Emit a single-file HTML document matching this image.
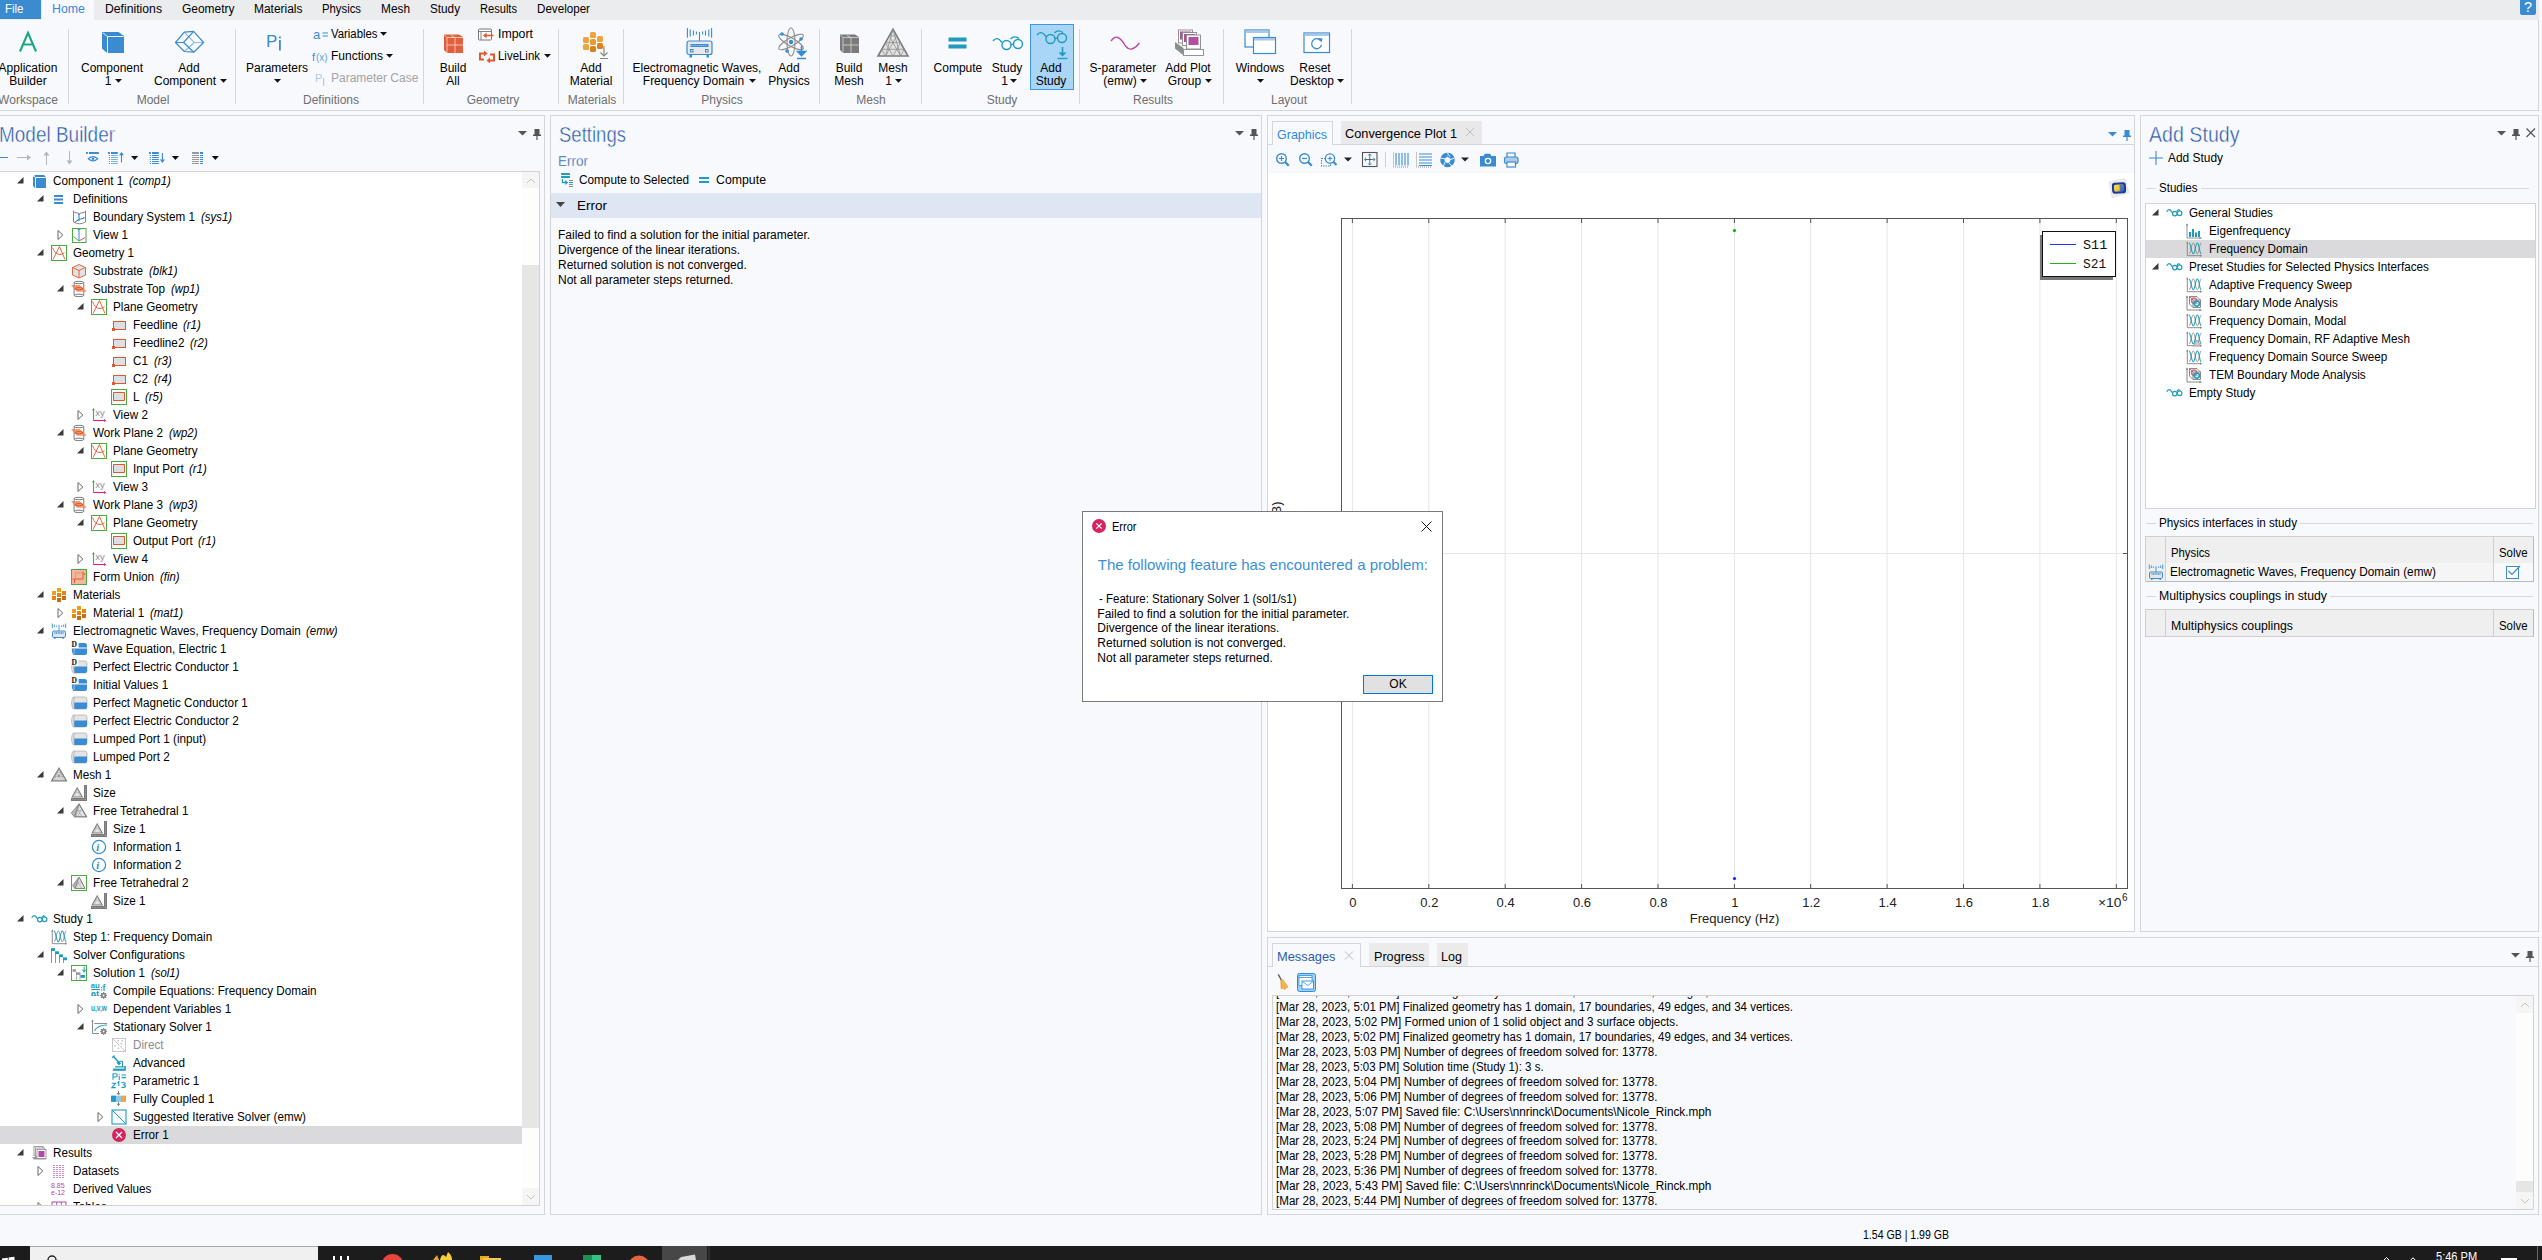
<!DOCTYPE html>
<html><head><meta charset="utf-8"><style>
html,body{margin:0;padding:0;}
body{width:2542px;height:1260px;position:relative;overflow:hidden;background:#f8f9fd;font-family:"Liberation Sans",sans-serif;font-size:12px;color:#000;}
.a{position:absolute;}
.t{white-space:pre;}
svg{overflow:visible;}
</style></head><body>
<div class="a" style="left:0px;top:0px;width:2539px;height:20px;background:#ebecee;"></div>
<div class="a" style="left:-5px;top:115px;width:550px;height:1100px;background:#f8f9fd;border:1px solid #d4d5d8;box-sizing:border-box;"></div>
<div class="a" style="left:550px;top:115px;width:712px;height:1100px;background:#f8f9fd;border:1px solid #d4d5d8;box-sizing:border-box;"></div>
<div class="a" style="left:1267px;top:115px;width:868px;height:817px;background:#f8f9fd;border:1px solid #d4d5d8;box-sizing:border-box;"></div>
<div class="a" style="left:2140px;top:115px;width:399px;height:817px;background:#f8f9fd;border:1px solid #d4d5d8;box-sizing:border-box;"></div>
<div class="a" style="left:1267px;top:937px;width:1272px;height:278px;background:#f8f9fd;border:1px solid #d4d5d8;box-sizing:border-box;"></div>
<div class="a" style="left:0px;top:0px;width:41px;height:19px;background:#3b8bd1;"></div>
<div class="a" style="left:42px;top:0px;width:52px;height:20px;background:#f8f9fd;"></div>
<div class="a" style="left:2520px;top:0px;width:16px;height:15px;background:#3b8bd1;border-radius:0 0 2px 2px;"></div>
<div class="a" style="left:0px;top:110px;width:2539px;height:1px;background:#d4d5d8;"></div>
<div class="a" style="left:2538px;top:20px;width:1px;height:91px;background:#d4d5d8;"></div>
<div class="a" style="left:68px;top:29px;width:1px;height:75px;background:#d6d6d6;"></div>
<div class="a" style="left:235px;top:29px;width:1px;height:75px;background:#d6d6d6;"></div>
<div class="a" style="left:423px;top:29px;width:1px;height:75px;background:#d6d6d6;"></div>
<div class="a" style="left:558px;top:29px;width:1px;height:75px;background:#d6d6d6;"></div>
<div class="a" style="left:623px;top:29px;width:1px;height:75px;background:#d6d6d6;"></div>
<div class="a" style="left:819px;top:29px;width:1px;height:75px;background:#d6d6d6;"></div>
<div class="a" style="left:921px;top:29px;width:1px;height:75px;background:#d6d6d6;"></div>
<div class="a" style="left:1079px;top:29px;width:1px;height:75px;background:#d6d6d6;"></div>
<div class="a" style="left:1223px;top:29px;width:1px;height:75px;background:#d6d6d6;"></div>
<div class="a" style="left:1351px;top:29px;width:1px;height:75px;background:#d6d6d6;"></div>
<div class="a" style="left:1030px;top:24px;width:44px;height:66px;background:#a9d5f7;border:1px solid #3d97e6;box-sizing:border-box;"></div>
<div class="a" style="left:0px;top:1246px;width:2542px;height:14px;background:#1c1c1c;"></div>
<div class="a" style="left:-5px;top:171px;width:545px;height:1035px;background:#ffffff;border:1px solid #d2d2d2;box-sizing:border-box;"></div>
<div class="a" style="left:551px;top:193px;width:710px;height:25px;background:#dde6f2;"></div>
<div class="a" style="left:1268px;top:144px;width:866px;height:1px;background:#d4d5d8;"></div>
<div class="a" style="left:1268px;top:173px;width:866px;height:758px;background:#ffffff;"></div>
<div class="a" style="left:2146px;top:188px;width:10px;height:1px;background:#d8d8d8;"></div>
<div class="a" style="left:2201px;top:188px;width:328px;height:1px;background:#d8d8d8;"></div>
<div class="a" style="left:2145px;top:203px;width:391px;height:306px;background:#ffffff;border:1px solid #d2d2d2;box-sizing:border-box;"></div>
<div class="a" style="left:2146px;top:523px;width:10px;height:1px;background:#d8d8d8;"></div>
<div class="a" style="left:2300px;top:523px;width:233px;height:1px;background:#d8d8d8;"></div>
<div class="a" style="left:2145px;top:536px;width:389px;height:46px;background:#efefef;border:1px solid #cfcfcf;box-sizing:border-box;"></div>
<div class="a" style="left:2146px;top:596px;width:10px;height:1px;background:#d8d8d8;"></div>
<div class="a" style="left:2330px;top:596px;width:203px;height:1px;background:#d8d8d8;"></div>
<div class="a" style="left:2145px;top:609px;width:389px;height:28px;background:#efefef;border:1px solid #cfcfcf;box-sizing:border-box;"></div>
<div class="a" style="left:1268px;top:966px;width:1270px;height:1px;background:#d4d5d8;"></div>
<div class="a" style="left:1272px;top:995px;width:1262px;height:215px;border:1px solid #d2d2d2;box-sizing:border-box;"></div>
<div class="a" style="left:30px;top:1246px;width:288px;height:14px;background:#f0f0f0;border-top:1px solid #aaa;box-sizing:border-box;"></div>
<div class="a" style="left:522px;top:172px;width:17px;height:1033px;background:#fdfdfd;"></div>
<div class="a" style="left:522px;top:172px;width:17px;height:16px;background:#f5f5f5;"></div>
<div class="a" style="left:522px;top:1188px;width:17px;height:17px;background:#f5f5f5;"></div>
<div class="a" style="left:522px;top:265px;width:17px;height:863px;background:#e6e6e6;"></div>
<div class="a" style="left:0px;top:1126px;width:522px;height:18px;background:#dadadd;"></div>
<div class="a" style="left:1272px;top:121px;width:61px;height:24px;background:#f8f9fd;border:1px solid #d4d5d8;border-bottom:none;box-sizing:border-box;"></div>
<div class="a" style="left:1341px;top:121px;width:141px;height:23px;background:#e9e9ea;"></div>
<svg class="a" style="left:1341px;top:218px;" width="787" height="671" viewBox="0 0 787 671"><path d="M11.4 1 V670" stroke="#e6e6e6" stroke-width="1"/><path d="M11.4 1 V5 M11.4 666 V670" stroke="#555" stroke-width="1"/><path d="M87.8 1 V670" stroke="#e6e6e6" stroke-width="1"/><path d="M87.8 1 V5 M87.8 666 V670" stroke="#555" stroke-width="1"/><path d="M164.2 1 V670" stroke="#e6e6e6" stroke-width="1"/><path d="M164.2 1 V5 M164.2 666 V670" stroke="#555" stroke-width="1"/><path d="M240.6 1 V670" stroke="#e6e6e6" stroke-width="1"/><path d="M240.6 1 V5 M240.6 666 V670" stroke="#555" stroke-width="1"/><path d="M317.0 1 V670" stroke="#e6e6e6" stroke-width="1"/><path d="M317.0 1 V5 M317.0 666 V670" stroke="#555" stroke-width="1"/><path d="M393.4 1 V670" stroke="#e6e6e6" stroke-width="1"/><path d="M393.4 1 V5 M393.4 666 V670" stroke="#555" stroke-width="1"/><path d="M469.7 1 V670" stroke="#e6e6e6" stroke-width="1"/><path d="M469.7 1 V5 M469.7 666 V670" stroke="#555" stroke-width="1"/><path d="M546.1 1 V670" stroke="#e6e6e6" stroke-width="1"/><path d="M546.1 1 V5 M546.1 666 V670" stroke="#555" stroke-width="1"/><path d="M622.5 1 V670" stroke="#e6e6e6" stroke-width="1"/><path d="M622.5 1 V5 M622.5 666 V670" stroke="#555" stroke-width="1"/><path d="M698.9 1 V670" stroke="#e6e6e6" stroke-width="1"/><path d="M698.9 1 V5 M698.9 666 V670" stroke="#555" stroke-width="1"/><path d="M775.3 1 V670" stroke="#e6e6e6" stroke-width="1"/><path d="M775.3 1 V5 M775.3 666 V670" stroke="#555" stroke-width="1"/><path d="M1 335.5 H786" stroke="#e6e6e6" stroke-width="1"/><path d="M1 335.5 H5 M782 335.5 H786" stroke="#555" stroke-width="1"/></svg>
<div class="a" style="left:2146px;top:240px;width:389px;height:18px;background:#dadadd;"></div>
<div class="a" style="left:2166px;top:563px;width:327px;height:18px;background:#f5f5f5;"></div>
<div class="a" style="left:2494px;top:563px;width:39px;height:18px;background:#f9f9fb;"></div>
<div class="a" style="left:1272px;top:943px;width:89px;height:24px;background:#f8f9fd;border:1px solid #d4d5d8;border-bottom:none;box-sizing:border-box;"></div>
<div class="a" style="left:1369px;top:943px;width:60px;height:23px;background:#ebebeb;"></div>
<div class="a" style="left:1437px;top:943px;width:31px;height:23px;background:#ebebeb;"></div>
<div class="a" style="left:2516px;top:996px;width:17px;height:213px;background:#fdfdfd;"></div>
<div class="a" style="left:2516px;top:996px;width:17px;height:17px;background:#f5f5f5;"></div>
<div class="a" style="left:2516px;top:1192px;width:17px;height:17px;background:#f5f5f5;"></div>
<div class="a" style="left:2516px;top:1181px;width:17px;height:11px;background:#e6e6e6;"></div>
<svg class="a" style="left:526px;top:178px;" width="10" height="6" viewBox="0 0 10 6"><path d="M1 5 L5 1 L9 5" stroke="#c4c4c4" stroke-width="1" fill="none"/></svg>
<svg class="a" style="left:526px;top:1194px;" width="10" height="6" viewBox="0 0 10 6"><path d="M1 1 L5 5 L9 1" stroke="#c4c4c4" stroke-width="1" fill="none"/></svg>
<svg class="a" style="left:31px;top:173px;" width="16" height="16" viewBox="0 0 16 16"><path d="M2 4 L4 2 H13 L15 4 V15 H4 L2 13 Z" fill="#3a8bd1"/><path d="M4.5 15 V4.5 H15 M4.5 4.5 L2.3 2.3" stroke="#fff" stroke-width="0.9" fill="none"/></svg>
<svg class="a" style="left:17px;top:176.5px;" width="7" height="7" viewBox="0 0 7 7"><path d="M6.5 0 V6.5 H0 Z" fill="#3a3a3a"/></svg>
<svg class="a" style="left:51px;top:191px;" width="16" height="16" viewBox="0 0 16 16"><rect x="3" y="4" width="9" height="2" fill="#3a8bd1"/><rect x="3" y="7.5" width="9" height="2" fill="#3a8bd1"/><rect x="3" y="11" width="9" height="2" fill="#3a8bd1"/></svg>
<svg class="a" style="left:37px;top:194.5px;" width="7" height="7" viewBox="0 0 7 7"><path d="M6.5 0 V6.5 H0 Z" fill="#3a3a3a"/></svg>
<svg class="a" style="left:71px;top:209px;" width="16" height="16" viewBox="0 0 16 16"><path d="M2.5 1.5 V13 Q8.5 16.5 14.5 13 V1.5 M2.5 3 Q8.5 6 14.5 3" stroke="#7a7a7a" stroke-width="0.9" fill="none"/><path d="M8 12 V5.5 M8 10.5 L13 9 M8 10.5 L4 13" stroke="#3a8bd1" stroke-width="1.1" fill="none"/><path d="M6.8 6 L8 4.2 L9.2 6 Z M12 8 L14 8.6 L12.6 10 Z" fill="#3a8bd1"/></svg>
<svg class="a" style="left:71px;top:227px;" width="16" height="16" viewBox="0 0 16 16"><rect x="1.5" y="1.5" width="13.5" height="14" fill="none" stroke="#4aab3f" stroke-width="1"/><path d="M8 14 V2.5 M6.5 2.6 H9.5" stroke="#3a8bd1" stroke-width="1" fill="none"/><path d="M8 14 L2.5 9.5" stroke="#4aab3f" stroke-width="0.9"/><path d="M8 14 L14 10.5" stroke="#e03a6a" stroke-width="0.9"/></svg>
<svg class="a" style="left:57px;top:230px;" width="7" height="10" viewBox="0 0 7 10"><path d="M1 0.5 L5.8 5 L1 9.5 Z" fill="none" stroke="#666" stroke-width="1"/></svg>
<svg class="a" style="left:51px;top:245px;" width="16" height="16" viewBox="0 0 16 16"><rect x="0.5" y="0.5" width="15" height="15" fill="none" stroke="#4aab3f" stroke-width="1"/><path d="M2 14.5 L8.5 1.5 L14 14.5 M1.5 2.5 Q4 9.5 9 9.5 Q12 9.5 13.5 7.5" stroke="#e4572e" stroke-width="0.9" fill="none"/></svg>
<svg class="a" style="left:37px;top:248.5px;" width="7" height="7" viewBox="0 0 7 7"><path d="M6.5 0 V6.5 H0 Z" fill="#3a3a3a"/></svg>
<svg class="a" style="left:71px;top:263px;" width="16" height="16" viewBox="0 0 16 16"><path d="M8 1.5 L14.5 4.5 V12 L8 15 L1.5 12 V4.5 Z" fill="#dfe3e6" stroke="#e4572e" stroke-width="0.9"/><path d="M1.5 4.5 L8 7.5 L14.5 4.5 M8 7.5 V15" stroke="#e4572e" stroke-width="0.9" fill="none"/></svg>
<svg class="a" style="left:71px;top:281px;" width="16" height="16" viewBox="0 0 16 16"><path d="M3.1 1.4 V14.5 M12.8 1.4 V14.5" stroke="#6e6e6e" stroke-width="0.9"/><ellipse cx="7.95" cy="1.5" rx="4.85" ry="1.2" fill="none" stroke="#6e6e6e" stroke-width="0.9"/><ellipse cx="7.95" cy="14.4" rx="4.85" ry="1.2" fill="#fff" stroke="#6e6e6e" stroke-width="0.9"/><path d="M0 4.1 H8.7 L16 10.7 H5.8 Z" fill="#ef8a5e" opacity="0.85"/><ellipse cx="8" cy="7.6" rx="3.8" ry="1.1" fill="none" stroke="#e25a28" stroke-width="1.1"/></svg>
<svg class="a" style="left:57px;top:284.5px;" width="7" height="7" viewBox="0 0 7 7"><path d="M6.5 0 V6.5 H0 Z" fill="#3a3a3a"/></svg>
<svg class="a" style="left:91px;top:299px;" width="16" height="16" viewBox="0 0 16 16"><rect x="0.5" y="0.5" width="15" height="15" fill="none" stroke="#4aab3f" stroke-width="1"/><path d="M2 14.5 L8.5 1.5 L14 14.5 M1.5 2.5 Q4 9.5 9 9.5 Q12 9.5 13.5 7.5" stroke="#e4572e" stroke-width="0.9" fill="none"/></svg>
<svg class="a" style="left:77px;top:302.5px;" width="7" height="7" viewBox="0 0 7 7"><path d="M6.5 0 V6.5 H0 Z" fill="#3a3a3a"/></svg>
<svg class="a" style="left:111px;top:317px;" width="16" height="16" viewBox="0 0 16 16"><rect x="2.5" y="4.5" width="12" height="8" fill="#dde0e3" stroke="#e4572e" stroke-width="1"/><rect x="1" y="11" width="3" height="3" fill="#e4572e"/></svg>
<svg class="a" style="left:111px;top:335px;" width="16" height="16" viewBox="0 0 16 16"><rect x="2.5" y="4.5" width="12" height="8" fill="#dde0e3" stroke="#e4572e" stroke-width="1"/><rect x="1" y="11" width="3" height="3" fill="#e4572e"/></svg>
<svg class="a" style="left:111px;top:353px;" width="16" height="16" viewBox="0 0 16 16"><rect x="2.5" y="4.5" width="12" height="8" fill="#dde0e3" stroke="#e4572e" stroke-width="1"/><rect x="1" y="11" width="3" height="3" fill="#e4572e"/></svg>
<svg class="a" style="left:111px;top:371px;" width="16" height="16" viewBox="0 0 16 16"><rect x="2.5" y="4.5" width="12" height="8" fill="#dde0e3" stroke="#e4572e" stroke-width="1"/><rect x="1" y="11" width="3" height="3" fill="#e4572e"/></svg>
<svg class="a" style="left:111px;top:389px;" width="16" height="16" viewBox="0 0 16 16"><rect x="0.5" y="0.5" width="15" height="15" fill="none" stroke="#4aab3f" stroke-width="1"/><rect x="2" y="3.5" width="12" height="8" fill="#dde0e3"/><path d="M2.5 12 V3.5 H13.5 V11.5 H2.5" stroke="#e4572e" stroke-width="1" fill="none"/></svg>
<svg class="a" style="left:91px;top:407px;" width="16" height="16" viewBox="0 0 16 16"><path d="M2.5 13.8 V2" stroke="#4aab3f" stroke-width="1.1"/><path d="M1 3.3 L2.5 1 L4 3.3Z" fill="#4aab3f"/><path d="M2.5 13.5 H13.5" stroke="#e0206a" stroke-width="1.1"/><path d="M13 12 L15.3 13.5 L13 15Z" fill="#e0206a"/><text x="4.3" y="9.3" font-size="9.5" fill="#8c8c96" font-family="Liberation Sans">xy</text></svg>
<svg class="a" style="left:77px;top:410px;" width="7" height="10" viewBox="0 0 7 10"><path d="M1 0.5 L5.8 5 L1 9.5 Z" fill="none" stroke="#666" stroke-width="1"/></svg>
<svg class="a" style="left:71px;top:425px;" width="16" height="16" viewBox="0 0 16 16"><path d="M3.1 1.4 V14.5 M12.8 1.4 V14.5" stroke="#6e6e6e" stroke-width="0.9"/><ellipse cx="7.95" cy="1.5" rx="4.85" ry="1.2" fill="none" stroke="#6e6e6e" stroke-width="0.9"/><ellipse cx="7.95" cy="14.4" rx="4.85" ry="1.2" fill="#fff" stroke="#6e6e6e" stroke-width="0.9"/><path d="M0 4.1 H8.7 L16 10.7 H5.8 Z" fill="#ef8a5e" opacity="0.85"/><ellipse cx="8" cy="7.6" rx="3.8" ry="1.1" fill="none" stroke="#e25a28" stroke-width="1.1"/></svg>
<svg class="a" style="left:57px;top:428.5px;" width="7" height="7" viewBox="0 0 7 7"><path d="M6.5 0 V6.5 H0 Z" fill="#3a3a3a"/></svg>
<svg class="a" style="left:91px;top:443px;" width="16" height="16" viewBox="0 0 16 16"><rect x="0.5" y="0.5" width="15" height="15" fill="none" stroke="#4aab3f" stroke-width="1"/><path d="M2 14.5 L8.5 1.5 L14 14.5 M1.5 2.5 Q4 9.5 9 9.5 Q12 9.5 13.5 7.5" stroke="#e4572e" stroke-width="0.9" fill="none"/></svg>
<svg class="a" style="left:77px;top:446.5px;" width="7" height="7" viewBox="0 0 7 7"><path d="M6.5 0 V6.5 H0 Z" fill="#3a3a3a"/></svg>
<svg class="a" style="left:111px;top:461px;" width="16" height="16" viewBox="0 0 16 16"><rect x="0.5" y="0.5" width="15" height="15" fill="none" stroke="#4aab3f" stroke-width="1"/><rect x="2" y="3.5" width="12" height="8" fill="#dde0e3"/><path d="M2.5 12 V3.5 H13.5 V11.5 H2.5" stroke="#e4572e" stroke-width="1" fill="none"/></svg>
<svg class="a" style="left:91px;top:479px;" width="16" height="16" viewBox="0 0 16 16"><path d="M2.5 13.8 V2" stroke="#4aab3f" stroke-width="1.1"/><path d="M1 3.3 L2.5 1 L4 3.3Z" fill="#4aab3f"/><path d="M2.5 13.5 H13.5" stroke="#e0206a" stroke-width="1.1"/><path d="M13 12 L15.3 13.5 L13 15Z" fill="#e0206a"/><text x="4.3" y="9.3" font-size="9.5" fill="#8c8c96" font-family="Liberation Sans">xy</text></svg>
<svg class="a" style="left:77px;top:482px;" width="7" height="10" viewBox="0 0 7 10"><path d="M1 0.5 L5.8 5 L1 9.5 Z" fill="none" stroke="#666" stroke-width="1"/></svg>
<svg class="a" style="left:71px;top:497px;" width="16" height="16" viewBox="0 0 16 16"><path d="M3.1 1.4 V14.5 M12.8 1.4 V14.5" stroke="#6e6e6e" stroke-width="0.9"/><ellipse cx="7.95" cy="1.5" rx="4.85" ry="1.2" fill="none" stroke="#6e6e6e" stroke-width="0.9"/><ellipse cx="7.95" cy="14.4" rx="4.85" ry="1.2" fill="#fff" stroke="#6e6e6e" stroke-width="0.9"/><path d="M0 4.1 H8.7 L16 10.7 H5.8 Z" fill="#ef8a5e" opacity="0.85"/><ellipse cx="8" cy="7.6" rx="3.8" ry="1.1" fill="none" stroke="#e25a28" stroke-width="1.1"/></svg>
<svg class="a" style="left:57px;top:500.5px;" width="7" height="7" viewBox="0 0 7 7"><path d="M6.5 0 V6.5 H0 Z" fill="#3a3a3a"/></svg>
<svg class="a" style="left:91px;top:515px;" width="16" height="16" viewBox="0 0 16 16"><rect x="0.5" y="0.5" width="15" height="15" fill="none" stroke="#4aab3f" stroke-width="1"/><path d="M2 14.5 L8.5 1.5 L14 14.5 M1.5 2.5 Q4 9.5 9 9.5 Q12 9.5 13.5 7.5" stroke="#e4572e" stroke-width="0.9" fill="none"/></svg>
<svg class="a" style="left:77px;top:518.5px;" width="7" height="7" viewBox="0 0 7 7"><path d="M6.5 0 V6.5 H0 Z" fill="#3a3a3a"/></svg>
<svg class="a" style="left:111px;top:533px;" width="16" height="16" viewBox="0 0 16 16"><rect x="0.5" y="0.5" width="15" height="15" fill="none" stroke="#4aab3f" stroke-width="1"/><rect x="2" y="3.5" width="12" height="8" fill="#dde0e3"/><path d="M2.5 12 V3.5 H13.5 V11.5 H2.5" stroke="#e4572e" stroke-width="1" fill="none"/></svg>
<svg class="a" style="left:91px;top:551px;" width="16" height="16" viewBox="0 0 16 16"><path d="M2.5 13.8 V2" stroke="#4aab3f" stroke-width="1.1"/><path d="M1 3.3 L2.5 1 L4 3.3Z" fill="#4aab3f"/><path d="M2.5 13.5 H13.5" stroke="#e0206a" stroke-width="1.1"/><path d="M13 12 L15.3 13.5 L13 15Z" fill="#e0206a"/><text x="4.3" y="9.3" font-size="9.5" fill="#8c8c96" font-family="Liberation Sans">xy</text></svg>
<svg class="a" style="left:77px;top:554px;" width="7" height="10" viewBox="0 0 7 10"><path d="M1 0.5 L5.8 5 L1 9.5 Z" fill="none" stroke="#666" stroke-width="1"/></svg>
<svg class="a" style="left:71px;top:569px;" width="16" height="16" viewBox="0 0 16 16"><rect x="0.5" y="0.5" width="15" height="15" fill="#f3b79d" stroke="#4aab3f" stroke-width="1"/><path d="M3.5 14 V10 H12 V2.5 M3.5 10 H1.5 M12 5 H14.5" stroke="#e4572e" stroke-width="1" fill="none"/><rect x="4.5" y="4" width="7.5" height="6" fill="none" stroke="#eb8a66" stroke-width="0.8"/></svg>
<svg class="a" style="left:51px;top:587px;" width="16" height="16" viewBox="0 0 16 16"><rect x="1" y="4" width="4" height="4" fill="#f29e1d"/><rect x="6" y="1" width="4" height="4" fill="#f29e1d"/><rect x="11" y="4" width="4" height="4" fill="#e8830f"/><rect x="1" y="9" width="4" height="4" fill="#e8830f"/><rect x="6" y="6" width="4" height="4" fill="#e8830f"/><rect x="11" y="9" width="4" height="4" fill="#c86e12"/><rect x="6" y="11" width="4" height="4" fill="#c86e12"/></svg>
<svg class="a" style="left:37px;top:590.5px;" width="7" height="7" viewBox="0 0 7 7"><path d="M6.5 0 V6.5 H0 Z" fill="#3a3a3a"/></svg>
<svg class="a" style="left:71px;top:605px;" width="16" height="16" viewBox="0 0 16 16"><rect x="1" y="4" width="4" height="4" fill="#f29e1d"/><rect x="6" y="1" width="4" height="4" fill="#f29e1d"/><rect x="11" y="4" width="4" height="4" fill="#e8830f"/><rect x="1" y="9" width="4" height="4" fill="#e8830f"/><rect x="6" y="6" width="4" height="4" fill="#e8830f"/><rect x="11" y="9" width="4" height="4" fill="#c86e12"/><rect x="6" y="11" width="4" height="4" fill="#c86e12"/></svg>
<svg class="a" style="left:57px;top:608px;" width="7" height="10" viewBox="0 0 7 10"><path d="M1 0.5 L5.8 5 L1 9.5 Z" fill="none" stroke="#666" stroke-width="1"/></svg>
<svg class="a" style="left:51px;top:623px;" width="16" height="16" viewBox="0 0 16 16"><path d="M1.3 0.5 V5 M3.3 1.5 V4 M5.3 2.5 V4 M10.7 2.5 V4 M12.7 1.5 V4 M14.7 0.5 V5 M8 2 V8" stroke="#3a8bd1" stroke-width="0.9"/><rect x="1.5" y="8" width="13" height="6.5" rx="1.2" fill="#e4e4e4" stroke="#3a8bd1" stroke-width="1"/><path d="M3.5 10 H12.5" stroke="#3a8bd1" stroke-width="1.4" stroke-dasharray="1 0.6"/><rect x="3" y="14.3" width="1.6" height="1.5" fill="#3a8bd1"/><rect x="11.4" y="14.3" width="1.6" height="1.5" fill="#3a8bd1"/></svg>
<svg class="a" style="left:37px;top:626.5px;" width="7" height="7" viewBox="0 0 7 7"><path d="M6.5 0 V6.5 H0 Z" fill="#3a3a3a"/></svg>
<svg class="a" style="left:71px;top:641px;" width="16" height="16" viewBox="0 0 16 16"><path d="M7.5 6.6 V2 H14 Q16 2 16 4.5 V6.6 Z" fill="#3a8bd1"/><path d="M0.8 7.4 H16 V12 Q16 14 14 14 H2.2 Q0.6 12 0.8 7.4 Z" fill="#3a8bd1"/><path d="M3.3 7.8 Q2.7 11 3.2 13.6" stroke="#d8e8f6" stroke-width="0.6" fill="none"/><rect x="0" y="0" width="7.3" height="6.6" fill="#fff"/><text x="0.6" y="6.3" font-size="7.6" font-weight="bold" font-family="Liberation Serif" fill="#111">D</text></svg>
<svg class="a" style="left:71px;top:659px;" width="16" height="16" viewBox="0 0 16 16"><path d="M2.2 2 H14 Q16 2 16 4.5 V12 Q16 14 14 14 H2.2 Q0.6 12 0.6 8 Q0.6 3.5 2.2 2 Z" fill="#e4e4e6" stroke="#a9a9a9" stroke-width="0.7"/><path d="M3.4 7.4 H16 V12 Q16 14 14 14 H3.4 Q2.6 11 3.4 7.4 Z" fill="#3a8bd1"/><path d="M3.3 2.3 Q2 8 3.3 13.7" stroke="#a0a0a0" stroke-width="0.6" fill="none"/><rect x="0" y="0" width="7.3" height="6.6" fill="#fff"/><text x="0.6" y="6.3" font-size="7.6" font-weight="bold" font-family="Liberation Serif" fill="#111">D</text></svg>
<svg class="a" style="left:71px;top:677px;" width="16" height="16" viewBox="0 0 16 16"><path d="M7.5 6.6 V2 H14 Q16 2 16 4.5 V6.6 Z" fill="#3a8bd1"/><path d="M0.8 7.4 H16 V12 Q16 14 14 14 H2.2 Q0.6 12 0.8 7.4 Z" fill="#3a8bd1"/><path d="M3.3 7.8 Q2.7 11 3.2 13.6" stroke="#d8e8f6" stroke-width="0.6" fill="none"/><rect x="0" y="0" width="7.3" height="6.6" fill="#fff"/><text x="0.6" y="6.3" font-size="7.6" font-weight="bold" font-family="Liberation Serif" fill="#111">D</text></svg>
<svg class="a" style="left:71px;top:695px;" width="16" height="16" viewBox="0 0 16 16"><path d="M2.2 2 H14 Q16 2 16 4.5 V12 Q16 14 14 14 H2.2 Q0.6 12 0.6 8 Q0.6 3.5 2.2 2 Z" fill="#e4e4e6" stroke="#a9a9a9" stroke-width="0.7"/><path d="M3.4 7.4 H16 V12 Q16 14 14 14 H3.4 Q2.6 11 3.4 7.4 Z" fill="#3a8bd1"/><path d="M3.3 2.3 Q2 8 3.3 13.7" stroke="#a0a0a0" stroke-width="0.6" fill="none"/></svg>
<svg class="a" style="left:71px;top:713px;" width="16" height="16" viewBox="0 0 16 16"><path d="M2.2 2 H14 Q16 2 16 4.5 V12 Q16 14 14 14 H2.2 Q0.6 12 0.6 8 Q0.6 3.5 2.2 2 Z" fill="#e4e4e6" stroke="#a9a9a9" stroke-width="0.7"/><path d="M3.4 7.4 H16 V12 Q16 14 14 14 H3.4 Q2.6 11 3.4 7.4 Z" fill="#3a8bd1"/><path d="M3.3 2.3 Q2 8 3.3 13.7" stroke="#a0a0a0" stroke-width="0.6" fill="none"/></svg>
<svg class="a" style="left:71px;top:731px;" width="16" height="16" viewBox="0 0 16 16"><path d="M2.2 2 H14 Q16 2 16 4.5 V12 Q16 14 14 14 H2.2 Q0.6 12 0.6 8 Q0.6 3.5 2.2 2 Z" fill="#e4e4e6" stroke="#a9a9a9" stroke-width="0.7"/><path d="M3.4 7.4 H16 V12 Q16 14 14 14 H3.4 Q2.6 11 3.4 7.4 Z" fill="#3a8bd1"/><path d="M3.3 2.3 Q2 8 3.3 13.7" stroke="#a0a0a0" stroke-width="0.6" fill="none"/></svg>
<svg class="a" style="left:71px;top:749px;" width="16" height="16" viewBox="0 0 16 16"><path d="M2.2 2 H14 Q16 2 16 4.5 V12 Q16 14 14 14 H2.2 Q0.6 12 0.6 8 Q0.6 3.5 2.2 2 Z" fill="#e4e4e6" stroke="#a9a9a9" stroke-width="0.7"/><path d="M3.4 7.4 H16 V12 Q16 14 14 14 H3.4 Q2.6 11 3.4 7.4 Z" fill="#3a8bd1"/><path d="M3.3 2.3 Q2 8 3.3 13.7" stroke="#a0a0a0" stroke-width="0.6" fill="none"/></svg>
<svg class="a" style="left:51px;top:767px;" width="16" height="16" viewBox="0 0 16 16"><path d="M8 1.2 L15.4 13.9 H0.6 Z" fill="#e6e6e6" stroke="#7d7d7d" stroke-width="1.3" stroke-linejoin="miter"/><g stroke="#9a9a9a" stroke-width="0.6" fill="none"><path d="M5.5 5.5 H10.5 M3.3 9.6 H12.7 M8 1.5 L3.3 13.5 M8 1.5 L12.7 13.5 M5.5 5.5 L10.5 13.5 M10.5 5.5 L5.5 13.5"/></g><circle cx="8" cy="8.5" r="1" fill="#888"/></svg>
<svg class="a" style="left:37px;top:770.5px;" width="7" height="7" viewBox="0 0 7 7"><path d="M6.5 0 V6.5 H0 Z" fill="#3a3a3a"/></svg>
<svg class="a" style="left:71px;top:785px;" width="16" height="16" viewBox="0 0 16 16"><path d="M6.2 3 L11.2 12 H1.2 Z" fill="#e6e6e6" stroke="#7d7d7d" stroke-width="1.1"/><path d="M3.7 7.5 H8.7 M6.2 3.5 L3.7 11.5 M6.2 3.5 L8.7 11.5" stroke="#a5a5a5" stroke-width="0.5" fill="none"/><rect x="0" y="13" width="16" height="3" fill="#7a7a7a"/><rect x="13" y="0" width="3" height="16" fill="#7a7a7a"/><path d="M1 14.5 H15 M14.5 1 V15" stroke="#c8c8c8" stroke-width="0.6" stroke-dasharray="0.6 1.1"/></svg>
<svg class="a" style="left:71px;top:803px;" width="16" height="16" viewBox="0 0 16 16"><path d="M8 1 L15.5 13.8 H3.5 L0.3 10 Z" fill="#b9b9b9" stroke="#808080" stroke-width="0.9"/><path d="M8 1 L15.5 13.8 H3.5 Z" fill="#e2e2e2" stroke="#7d7d7d" stroke-width="1.1"/><path d="M5.7 7.4 H11.8 M8 1.5 L5 13.5 M9.7 7.4 L6.6 13.5 M7 7.4 L11 13.5" stroke="#9a9a9a" stroke-width="0.6" fill="none"/></svg>
<svg class="a" style="left:57px;top:806.5px;" width="7" height="7" viewBox="0 0 7 7"><path d="M6.5 0 V6.5 H0 Z" fill="#3a3a3a"/></svg>
<svg class="a" style="left:91px;top:821px;" width="16" height="16" viewBox="0 0 16 16"><path d="M6.2 3 L11.2 12 H1.2 Z" fill="#e6e6e6" stroke="#7d7d7d" stroke-width="1.1"/><path d="M3.7 7.5 H8.7 M6.2 3.5 L3.7 11.5 M6.2 3.5 L8.7 11.5" stroke="#a5a5a5" stroke-width="0.5" fill="none"/><rect x="0" y="13" width="16" height="3" fill="#7a7a7a"/><rect x="13" y="0" width="3" height="16" fill="#7a7a7a"/><path d="M1 14.5 H15 M14.5 1 V15" stroke="#c8c8c8" stroke-width="0.6" stroke-dasharray="0.6 1.1"/></svg>
<svg class="a" style="left:91px;top:839px;" width="16" height="16" viewBox="0 0 16 16"><circle cx="8" cy="8" r="6.6" fill="none" stroke="#2f8ad4" stroke-width="1.2"/><text x="5.3" y="12.3" font-size="10.5" font-style="italic" font-weight="bold" font-family="Liberation Serif" fill="#2f8ad4">i</text></svg>
<svg class="a" style="left:91px;top:857px;" width="16" height="16" viewBox="0 0 16 16"><circle cx="8" cy="8" r="6.6" fill="none" stroke="#2f8ad4" stroke-width="1.2"/><text x="5.3" y="12.3" font-size="10.5" font-style="italic" font-weight="bold" font-family="Liberation Serif" fill="#2f8ad4">i</text></svg>
<svg class="a" style="left:71px;top:875px;" width="16" height="16" viewBox="0 0 16 16"><rect x="0.5" y="0.5" width="15" height="15" fill="none" stroke="#4aab3f" stroke-width="1"/><path d="M8 2 L14 13.5 H3.8 L1.5 10.5 Z" fill="#b5b5b5" stroke="#888" stroke-width="0.8"/><path d="M8 2 L14 13.5 H4 Z" fill="#e0e0e0" stroke="#808080" stroke-width="0.9"/><path d="M6 7.8 H11 M8 2.5 L5.5 13 M7 7.8 L10.5 13" stroke="#9a9a9a" stroke-width="0.5" fill="none"/></svg>
<svg class="a" style="left:57px;top:878.5px;" width="7" height="7" viewBox="0 0 7 7"><path d="M6.5 0 V6.5 H0 Z" fill="#3a3a3a"/></svg>
<svg class="a" style="left:91px;top:893px;" width="16" height="16" viewBox="0 0 16 16"><path d="M6.2 3 L11.2 12 H1.2 Z" fill="#e6e6e6" stroke="#7d7d7d" stroke-width="1.1"/><path d="M3.7 7.5 H8.7 M6.2 3.5 L3.7 11.5 M6.2 3.5 L8.7 11.5" stroke="#a5a5a5" stroke-width="0.5" fill="none"/><rect x="0" y="13" width="16" height="3" fill="#7a7a7a"/><rect x="13" y="0" width="3" height="16" fill="#7a7a7a"/><path d="M1 14.5 H15 M14.5 1 V15" stroke="#c8c8c8" stroke-width="0.6" stroke-dasharray="0.6 1.1"/></svg>
<svg class="a" style="left:31px;top:911px;" width="16" height="16" viewBox="0 0 16 16"><g fill="none" stroke="#1e9bbd" stroke-width="1.2"><path d="M0.7 6.8 Q3 2.5 5.6 6.6 L6.4 7.6"/><circle cx="8.8" cy="8.6" r="2.3"/><circle cx="13.6" cy="8.3" r="2.3"/><path d="M11.1 6.2 Q12.3 3.8 14.2 5.6"/></g></svg>
<svg class="a" style="left:17px;top:914.5px;" width="7" height="7" viewBox="0 0 7 7"><path d="M6.5 0 V6.5 H0 Z" fill="#3a3a3a"/></svg>
<svg class="a" style="left:51px;top:929px;" width="16" height="16" viewBox="0 0 16 16"><path d="M1.3 1 V14.7 H15.5" stroke="#808080" stroke-width="0.9" fill="none"/><path d="M0.2 2.5 L1.3 0.5 L2.4 2.5Z M14 13.6 L16 14.7 L14 15.8Z" fill="#808080"/><path d="M3 12.7 C5 12.7 5.3 2 7.3 2 C9.3 2 9.3 12.7 11.3 12.7 C13.3 12.7 13.3 2 15.3 2" stroke="#8a8a8a" stroke-width="0.9" fill="none"/><path d="M3 2 C5 2 5.3 12.7 7.3 12.7 C9.3 12.7 9.3 2 11.3 2 C13.3 2 13.3 12.7 15.3 12.7" stroke="#1e9bbd" stroke-width="1.1" fill="none"/></svg>
<svg class="a" style="left:51px;top:947px;" width="16" height="16" viewBox="0 0 16 16"><path d="M0.5 4 V16 M4.5 7 V16 M8.5 10 V16 M12.5 13 V16" stroke="#8a8a8a" stroke-width="0.9"/><rect x="0" y="1.2" width="4" height="2.8" fill="#1e9bbd"/><rect x="4" y="4.3" width="4" height="2.8" fill="#1e9bbd"/><rect x="8" y="7.4" width="4" height="2.8" fill="#1e9bbd"/><rect x="12" y="10.4" width="4" height="2.8" fill="#1e9bbd"/></svg>
<svg class="a" style="left:37px;top:950.5px;" width="7" height="7" viewBox="0 0 7 7"><path d="M6.5 0 V6.5 H0 Z" fill="#3a3a3a"/></svg>
<svg class="a" style="left:71px;top:965px;" width="16" height="16" viewBox="0 0 16 16"><rect x="0.5" y="0.5" width="15" height="15" fill="none" stroke="#4aab3f" stroke-width="1"/><rect x="1.5" y="4.2" width="3.5" height="2.6" fill="#9a9a9a"/><rect x="5" y="7.3" width="4.5" height="2.6" fill="#9a9a9a"/><path d="M5.5 6.8 V15 M9 9.9 V15" stroke="#9a9a9a" stroke-width="0.8"/><rect x="9.5" y="10" width="4.5" height="2.8" fill="#1e9bbd"/><path d="M13.2 1.5 V7" stroke="#1e9bbd" stroke-width="1"/><path d="M11.3 4.5 L13.2 7.2 L14.9 4.5" stroke="#1e9bbd" stroke-width="1" fill="none"/></svg>
<svg class="a" style="left:57px;top:968.5px;" width="7" height="7" viewBox="0 0 7 7"><path d="M6.5 0 V6.5 H0 Z" fill="#3a3a3a"/></svg>
<svg class="a" style="left:91px;top:983px;" width="16" height="16" viewBox="0 0 16 16"><text x="-0.3" y="5.3" font-size="7" font-weight="bold" font-family="Liberation Sans" fill="#1e9bbd" textLength="9" lengthAdjust="spacingAndGlyphs">au</text><rect x="0.3" y="6" width="8.7" height="1.1" fill="#1e9bbd"/><text x="-0.3" y="12.8" font-size="7" font-weight="bold" font-family="Liberation Sans" fill="#1e9bbd" textLength="8.5" lengthAdjust="spacingAndGlyphs">at</text><rect x="10" y="4" width="1.2" height="1.1" fill="#1e9bbd"/><rect x="10" y="6.3" width="1.2" height="1.1" fill="#1e9bbd"/><text x="11.6" y="8" font-size="8.5" font-weight="bold" font-family="Liberation Sans" fill="#1e9bbd">f</text><g fill="#808080"><circle cx="12.6" cy="12.5" r="2.5"/><rect x="12.0" y="9.1" width="1.2" height="1.6" transform="rotate(0 12.6 12.5)"/><rect x="12.0" y="9.1" width="1.2" height="1.6" transform="rotate(45 12.6 12.5)"/><rect x="12.0" y="9.1" width="1.2" height="1.6" transform="rotate(90 12.6 12.5)"/><rect x="12.0" y="9.1" width="1.2" height="1.6" transform="rotate(135 12.6 12.5)"/><rect x="12.0" y="9.1" width="1.2" height="1.6" transform="rotate(180 12.6 12.5)"/><rect x="12.0" y="9.1" width="1.2" height="1.6" transform="rotate(225 12.6 12.5)"/><rect x="12.0" y="9.1" width="1.2" height="1.6" transform="rotate(270 12.6 12.5)"/><rect x="12.0" y="9.1" width="1.2" height="1.6" transform="rotate(315 12.6 12.5)"/></g><circle cx="12.6" cy="12.5" r="0.9" fill="#fff"/></svg>
<svg class="a" style="left:91px;top:1001px;" width="16" height="16" viewBox="0 0 16 16"><text x="0" y="10" font-size="8.3" font-weight="bold" font-family="Liberation Sans" fill="#1e9bbd" textLength="16" lengthAdjust="spacingAndGlyphs">u,v,w</text></svg>
<svg class="a" style="left:77px;top:1004px;" width="7" height="10" viewBox="0 0 7 10"><path d="M1 0.5 L5.8 5 L1 9.5 Z" fill="none" stroke="#666" stroke-width="1"/></svg>
<svg class="a" style="left:91px;top:1019px;" width="16" height="16" viewBox="0 0 16 16"><path d="M1.5 1.5 V14.5 H8" stroke="#808080" stroke-width="0.9" fill="none"/><path d="M0.3 2.5 L1.5 0.5 L2.7 2.5Z" fill="#808080"/><path d="M3.3 4.5 H16" stroke="#808080" stroke-width="0.9"/><path d="M3.5 11.8 Q6.5 6 16 6" stroke="#1e9bbd" stroke-width="1.1" fill="none"/><g fill="#808080"><circle cx="12.6" cy="12.5" r="2.5"/><rect x="12.0" y="9.1" width="1.2" height="1.6" transform="rotate(0 12.6 12.5)"/><rect x="12.0" y="9.1" width="1.2" height="1.6" transform="rotate(45 12.6 12.5)"/><rect x="12.0" y="9.1" width="1.2" height="1.6" transform="rotate(90 12.6 12.5)"/><rect x="12.0" y="9.1" width="1.2" height="1.6" transform="rotate(135 12.6 12.5)"/><rect x="12.0" y="9.1" width="1.2" height="1.6" transform="rotate(180 12.6 12.5)"/><rect x="12.0" y="9.1" width="1.2" height="1.6" transform="rotate(225 12.6 12.5)"/><rect x="12.0" y="9.1" width="1.2" height="1.6" transform="rotate(270 12.6 12.5)"/><rect x="12.0" y="9.1" width="1.2" height="1.6" transform="rotate(315 12.6 12.5)"/></g><circle cx="12.6" cy="12.5" r="0.9" fill="#fff"/></svg>
<svg class="a" style="left:77px;top:1022.5px;" width="7" height="7" viewBox="0 0 7 7"><path d="M6.5 0 V6.5 H0 Z" fill="#3a3a3a"/></svg>
<svg class="a" style="left:111px;top:1037px;" width="16" height="16" viewBox="0 0 16 16"><rect x="1.5" y="1.5" width="13" height="13" fill="none" stroke="#c8c8c8" stroke-width="1"/><path d="M2 2 L14 14" stroke="#c8c8c8" stroke-width="1"/><g fill="#c4c4c4"><rect x="6.5" y="3" width="1.5" height="1.5"/><rect x="10.5" y="3" width="1.5" height="1.5"/><rect x="9.5" y="6" width="1.5" height="1.5"/><rect x="3" y="8" width="1.5" height="1.5"/><rect x="6.5" y="10.5" width="1.5" height="1.5"/></g></svg>
<svg class="a" style="left:111px;top:1055px;" width="16" height="16" viewBox="0 0 16 16"><path d="M1.8 15 H14.2 V11 M4 11.8 H14.2" stroke="#1e9bbd" stroke-width="1.3" fill="none"/><path d="M2 14.4 H14" stroke="#1e9bbd" stroke-width="1.6"/><path d="M2.5 1.5 L8 7.5" stroke="#1e9bbd" stroke-width="1.5"/><path d="M1 2.8 L3.5 0.5" stroke="#1e9bbd" stroke-width="1.2"/><rect x="6.3" y="6.3" width="3" height="3.5" fill="#1e9bbd" transform="rotate(-40 7.8 8)"/><path d="M8.5 6.3 H11.5 V11.5" stroke="#1e9bbd" stroke-width="1" fill="none"/></svg>
<svg class="a" style="left:111px;top:1073px;" width="16" height="16" viewBox="0 0 16 16"><g fill="none" stroke="#1e9bbd" stroke-width="1.1"><path d="M2 6.8 V0.8 H4.8 Q6.3 0.8 6.3 2.4 Q6.3 4 4.8 4 H2"/><path d="M10.5 2 H15 M10.5 4.6 H15"/></g><rect x="7.7" y="3" width="1.1" height="4" fill="#1e9bbd"/><rect x="7.7" y="1.2" width="1.1" height="1" fill="#1e9bbd"/><g fill="none" stroke="#1e9bbd" stroke-width="1.1"><path d="M0.8 10.3 H4.5 L0.8 14.6 H4.8"/><path d="M6.5 10 L7.8 8.7 V13"/><path d="M10.5 10 Q12 9 14 10 Q14.5 11.2 12.3 11.8 Q14.8 12.2 14.3 13.8 Q12.5 15.2 10.5 14"/></g></svg>
<svg class="a" style="left:111px;top:1091px;" width="16" height="16" viewBox="0 0 16 16"><rect x="0" y="4.6" width="5" height="6.3" fill="#1e9bbd"/><rect x="5" y="4.6" width="5" height="6.3" fill="#8ec8ee"/><rect x="10" y="4.6" width="5" height="6.3" fill="#f0a440"/><path d="M7.5 0 V3.5 M7.5 11 V14.5" stroke="#808080" stroke-width="1"/><path d="M5.5 2 L7.5 4.2 L9.5 2 Z M5.5 12.8 L7.5 15 L9.5 12.8 Z" fill="#808080"/></svg>
<svg class="a" style="left:111px;top:1109px;" width="16" height="16" viewBox="0 0 16 16"><rect x="1" y="1" width="14" height="14" fill="none" stroke="#1e9bbd" stroke-width="1.1"/><path d="M1 1 L15 15" stroke="#1e9bbd" stroke-width="1"/></svg>
<svg class="a" style="left:97px;top:1112px;" width="7" height="10" viewBox="0 0 7 10"><path d="M1 0.5 L5.8 5 L1 9.5 Z" fill="none" stroke="#666" stroke-width="1"/></svg>
<svg class="a" style="left:111px;top:1127px;" width="16" height="16" viewBox="0 0 16 16"><circle cx="8" cy="8" r="7" fill="#d6245f"/><path d="M5 5 L11 11 M11 5 L5 11" stroke="#fff" stroke-width="1.3"/></svg>
<svg class="a" style="left:31px;top:1145px;" width="16" height="16" viewBox="0 0 16 16"><path d="M1 12 L3 14.5 H15 V12 Z" fill="#9a9a9a"/><rect x="3" y="1.5" width="9" height="9" fill="#fff" stroke="#8a8a8a" stroke-width="0.8"/><rect x="4.5" y="3" width="9" height="9" fill="#fff" stroke="#8a8a8a" stroke-width="0.8"/><rect x="6" y="4.5" width="9" height="9" fill="#fff" stroke="#8a8a8a" stroke-width="0.8"/><rect x="7.5" y="6" width="6" height="6" fill="#b548a5"/></svg>
<svg class="a" style="left:17px;top:1148.5px;" width="7" height="7" viewBox="0 0 7 7"><path d="M6.5 0 V6.5 H0 Z" fill="#3a3a3a"/></svg>
<svg class="a" style="left:51px;top:1163px;" width="16" height="16" viewBox="0 0 16 16"><path d="M3 2 V15 M6 2 V15 M9 2 V15 M12 2 V15" stroke="#b548a5" stroke-width="1.2" stroke-dasharray="1 1"/></svg>
<svg class="a" style="left:37px;top:1166px;" width="7" height="10" viewBox="0 0 7 10"><path d="M1 0.5 L5.8 5 L1 9.5 Z" fill="none" stroke="#666" stroke-width="1"/></svg>
<svg class="a" style="left:51px;top:1181px;" width="16" height="16" viewBox="0 0 16 16"><text x="0" y="7" font-size="7" font-family="Liberation Sans" fill="#b548a5">8.85</text><text x="0" y="14" font-size="7" font-family="Liberation Sans" fill="#b548a5">e-12</text></svg>
<svg class="a" style="left:51px;top:1199px;" width="16" height="16" viewBox="0 0 16 16"><rect x="1" y="3" width="14" height="10" fill="none" stroke="#b548a5" stroke-width="1"/><path d="M1 6.5 H15 M1 10 H15 M5.7 3 V13 M10.3 3 V13" stroke="#b548a5" stroke-width="0.9"/></svg>
<svg class="a" style="left:37px;top:1202px;" width="7" height="10" viewBox="0 0 7 10"><path d="M1 0.5 L5.8 5 L1 9.5 Z" fill="none" stroke="#666" stroke-width="1"/></svg>
<svg class="a" style="left:518px;top:131px;" width="9" height="5" viewBox="0 0 9 5"><path d="M0 0 H9 L4.5 4.5 Z" fill="#555"/></svg>
<svg class="a" style="left:533px;top:129px;" width="8" height="11" viewBox="0 0 8 11"><rect x="1.5" y="0" width="5" height="6" fill="#555"/><rect x="0" y="5.5" width="8" height="1.5" fill="#555"/><rect x="3.4" y="6" width="1.2" height="5" fill="#555"/></svg>
<svg class="a" style="left:1235px;top:131px;" width="9" height="5" viewBox="0 0 9 5"><path d="M0 0 H9 L4.5 4.5 Z" fill="#555"/></svg>
<svg class="a" style="left:1250px;top:129px;" width="8" height="11" viewBox="0 0 8 11"><rect x="1.5" y="0" width="5" height="6" fill="#555"/><rect x="0" y="5.5" width="8" height="1.5" fill="#555"/><rect x="3.4" y="6" width="1.2" height="5" fill="#555"/></svg>
<svg class="a" style="left:2108px;top:132px;" width="9" height="5" viewBox="0 0 9 5"><path d="M0 0 H9 L4.5 4.5 Z" fill="#3a8bd1"/></svg>
<svg class="a" style="left:2123px;top:130px;" width="8" height="11" viewBox="0 0 8 11"><rect x="1.5" y="0" width="5" height="6" fill="#3a8bd1"/><rect x="0" y="5.5" width="8" height="1.5" fill="#3a8bd1"/><rect x="3.4" y="6" width="1.2" height="5" fill="#3a8bd1"/></svg>
<svg class="a" style="left:2497px;top:131px;" width="9" height="5" viewBox="0 0 9 5"><path d="M0 0 H9 L4.5 4.5 Z" fill="#555"/></svg>
<svg class="a" style="left:2512px;top:129px;" width="8" height="11" viewBox="0 0 8 11"><rect x="1.5" y="0" width="5" height="6" fill="#555"/><rect x="0" y="5.5" width="8" height="1.5" fill="#555"/><rect x="3.4" y="6" width="1.2" height="5" fill="#555"/></svg>
<svg class="a" style="left:2511px;top:953px;" width="9" height="5" viewBox="0 0 9 5"><path d="M0 0 H9 L4.5 4.5 Z" fill="#555"/></svg>
<svg class="a" style="left:2526px;top:951px;" width="8" height="11" viewBox="0 0 8 11"><rect x="1.5" y="0" width="5" height="6" fill="#555"/><rect x="0" y="5.5" width="8" height="1.5" fill="#555"/><rect x="3.4" y="6" width="1.2" height="5" fill="#555"/></svg>
<svg class="a" style="left:2526px;top:128px;" width="10" height="10" viewBox="0 0 10 10"><path d="M0.5 0.5 L9 9 M9 0.5 L0.5 9" stroke="#555" stroke-width="1.2"/></svg>
<svg class="a" style="left:0px;top:151px;" width="230" height="16" viewBox="0 0 230 16">
<path d="M0 6.5 H8" stroke="#3a8bd1" stroke-width="1"/>
<path d="M17 6.5 H29" stroke="#b5b5b5" stroke-width="1"/><path d="M27 3.5 L31 6.5 L27 9.5 Z" fill="#b5b5b5"/>
<path d="M46.5 14 V2" stroke="#b5b5b5" stroke-width="1"/><path d="M43.5 4.5 L46.5 0.5 L49.5 4.5 Z" fill="#b5b5b5"/>
<path d="M69.5 0 V12" stroke="#b5b5b5" stroke-width="1"/><path d="M66.5 9.5 L69.5 13.5 L72.5 9.5 Z" fill="#b5b5b5"/>
<rect x="86" y="1" width="1.8" height="2" fill="#3a8bd1"/><rect x="89" y="1" width="9.8" height="2" fill="#3a8bd1"/>
<path d="M88.3 7.8 Q93 3.5 97.7 7.8 Q93 12 88.3 7.8 Z" fill="none" stroke="#3a8bd1" stroke-width="1.2"/><circle cx="93" cy="7.8" r="1.3" fill="#3a8bd1"/>
<rect x="108" y="1" width="1.8" height="2" fill="#3a8bd1"/><rect x="111" y="1" width="6.8" height="2" fill="#3a8bd1"/><rect x="108.9" y="4" width="1" height="1" fill="#3a8bd1"/><rect x="111" y="4" width="6.8" height="1" fill="#3a8bd1" opacity="0.65"/><rect x="108.9" y="6" width="1" height="1" fill="#3a8bd1"/><rect x="111" y="6" width="6.8" height="1" fill="#3a8bd1" opacity="0.65"/><rect x="108.9" y="8" width="1" height="1" fill="#3a8bd1"/><rect x="111" y="8" width="6.8" height="1" fill="#3a8bd1" opacity="0.65"/><rect x="108.9" y="10" width="1" height="1" fill="#3a8bd1"/><rect x="111" y="10" width="6.8" height="1" fill="#3a8bd1" opacity="0.65"/><rect x="108.9" y="12" width="1" height="1" fill="#3a8bd1"/><rect x="111" y="12" width="6.8" height="1" fill="#3a8bd1" opacity="0.65"/>
<path d="M121.5 11.5 V2" stroke="#3a8bd1" stroke-width="1.1"/><path d="M119 4.3 L121.5 1 L124 4.3 Z" fill="#3a8bd1"/>
<path d="M131 5 H138.2 L134.6 9 Z" fill="#111"/>
<rect x="149" y="1" width="1.8" height="2" fill="#3a8bd1"/><rect x="152" y="1" width="6.8" height="2" fill="#3a8bd1"/><rect x="149.9" y="4" width="1" height="1" fill="#3a8bd1"/><rect x="152" y="4" width="6.8" height="1" fill="#3a8bd1" opacity="1.0"/><rect x="149.9" y="6" width="1" height="1" fill="#3a8bd1"/><rect x="152" y="6" width="6.8" height="1" fill="#3a8bd1" opacity="1.0"/><rect x="149.9" y="8" width="1" height="1" fill="#3a8bd1"/><rect x="152" y="8" width="6.8" height="1" fill="#3a8bd1" opacity="1.0"/><rect x="149.9" y="10" width="1" height="1" fill="#3a8bd1"/><rect x="152" y="10" width="6.8" height="1" fill="#3a8bd1" opacity="1.0"/><rect x="149.9" y="12" width="1" height="1" fill="#3a8bd1"/><rect x="152" y="12" width="6.8" height="1" fill="#3a8bd1" opacity="1.0"/>
<path d="M162.4 2 V11" stroke="#3a8bd1" stroke-width="1.1"/><path d="M159.9 8.5 L162.4 12 L165 8.5 Z" fill="#3a8bd1"/>
<path d="M171.8 5 H179 L175.4 9 Z" fill="#111"/>
<rect x="192" y="1" width="7" height="2" fill="#999"/><rect x="200" y="1" width="3" height="2" fill="#3a8bd1"/><rect x="192" y="4" width="7" height="1" fill="#999"/><rect x="200" y="4" width="3" height="1" fill="#3a8bd1"/><rect x="192" y="6" width="7" height="1" fill="#999"/><rect x="200" y="6" width="3" height="1" fill="#3a8bd1"/><rect x="192" y="8" width="7" height="1" fill="#999"/><rect x="200" y="8" width="3" height="1" fill="#3a8bd1"/><rect x="192" y="10" width="7" height="1" fill="#999"/><rect x="200" y="10" width="3" height="1" fill="#3a8bd1"/><rect x="192" y="12" width="7" height="1" fill="#999"/><rect x="200" y="12" width="3" height="1" fill="#3a8bd1"/>
<path d="M211.8 5 H218.9 L215.35 9 Z" fill="#111"/>
</svg>
<svg class="a" style="left:560px;top:173px;" width="15" height="15" viewBox="0 0 15 15"><rect x="1" y="0" width="9" height="2" rx="0.5" fill="#1e9bbd"/><rect x="1" y="3.1" width="9" height="2" rx="0.5" fill="#1e9bbd"/><path d="M2.5 6 V9.5 H6" stroke="#1e9bbd" stroke-width="1.3" fill="none"/><path d="M5.3 7 L8.3 9.5 L5.3 12 Z" fill="#1e9bbd"/><rect x="9" y="7" width="4" height="1" fill="#8a8a8a"/><rect x="9" y="9" width="4" height="1.1" fill="#1e9bbd"/><rect x="9" y="11" width="4" height="1" fill="#8a8a8a"/><rect x="9" y="13" width="4" height="1" fill="#8a8a8a"/></svg>
<svg class="a" style="left:699px;top:177px;" width="10" height="7" viewBox="0 0 10 7"><rect x="0" y="0" width="10" height="2" fill="#1e9bbd"/><rect x="0" y="4" width="10" height="2" fill="#1e9bbd"/></svg>
<svg class="a" style="left:556px;top:202px;" width="9" height="6" viewBox="0 0 9 6"><path d="M0 0 H9 L4.5 5 Z" fill="#444"/></svg>
<svg class="a" style="left:1465px;top:127px;" width="10" height="10" viewBox="0 0 10 10"><path d="M1 1 L9 9 M9 1 L1 9" stroke="#c0c0c0" stroke-width="1"/></svg>
<svg class="a" style="left:1275px;top:152px;" width="250" height="18" viewBox="0 0 250 18">
<g stroke="#3a8bd1" fill="none" stroke-width="1.4"><circle cx="6.5" cy="6.5" r="4.8"/><path d="M10 10 L13.8 13.8" stroke-width="2.2"/><path d="M4 6.5 H9 M6.5 4 V9" stroke-width="1.2"/></g>
<g stroke="#3a8bd1" fill="none" stroke-width="1.4"><circle cx="29.5" cy="6.5" r="4.8"/><path d="M33 10 L36.8 13.8" stroke-width="2.2"/><path d="M27 6.5 H32" stroke-width="1.2"/></g>
<g stroke="#3a8bd1" fill="none" stroke-width="1.3"><rect x="46.5" y="6.5" width="9" height="7.5" stroke-dasharray="1.5 1" stroke-width="1.1"/><circle cx="55" cy="6.5" r="4.6" fill="#f8f9fd"/><path d="M58.3 9.8 L61.5 13" stroke-width="2.1"/><path d="M52.7 6.5 H57.3 M55 4.2 V8.8" stroke-width="1.1"/></g>
<path d="M69 5.5 H77 L73 9.5 Z" fill="#222"/>
<rect x="87.5" y="0.5" width="14.5" height="14" fill="none" stroke="#555" stroke-width="1.1"/>
<path d="M94.75 3.5 V11.5 M91 7.5 H98.5" stroke="#555" stroke-width="0.9"/><path d="M92.5 3.5 L94.75 1.5 L97 3.5Z M92.5 11.5 L94.75 13.5 L97 11.5Z M91 5.3 L89 7.5 L91 9.7Z M98.5 5.3 L100.5 7.5 L98.5 9.7Z" fill="#3a8bd1"/>
<path d="M110.5 0 V15" stroke="#cfcfcf" stroke-width="1"/>
<g stroke="#3a8bd1" stroke-width="1.1"><path d="M121 1 V13.5 M124 1 V13.5 M127 1 V13.5 M130 1 V13.5 M133 1 V13.5"/></g><path d="M118.5 0.5 V15 H133" stroke="#777" stroke-width="0.8" stroke-dasharray="1 1" fill="none"/>
<g stroke="#3a8bd1" stroke-width="1.1"><path d="M144 2 H157 M144 5 H157 M144 8 H157 M144 11 H157 M144 13.5 H157"/></g><path d="M141.5 0.5 V15 H157" stroke="#777" stroke-width="0.8" stroke-dasharray="1 1" fill="none"/>
<g fill="#3a8bd1" transform="translate(172.5 8)"><path d="M0 -7.2 A7.2 7.2 0 0 1 6.8 -2.2 L2.5 -1.5 A3 3 0 0 0 0 -3 Z"/><path d="M6.8 -2.2 A7.2 7.2 0 0 1 4.2 5.8 L1.8 2.2 A3 3 0 0 0 2.5 -1.5 Z" transform="rotate(0)"/><path d="M4.2 5.8 A7.2 7.2 0 0 1 -4.2 5.8 L-1.5 2.6 A3 3 0 0 0 1.8 2.2 Z"/><path d="M-4.2 5.8 A7.2 7.2 0 0 1 -6.8 -2.2 L-2.8 -1 A3 3 0 0 0 -1.5 2.6 Z"/><path d="M-6.8 -2.2 A7.2 7.2 0 0 1 0 -7.2 L0 -3 A3 3 0 0 0 -2.8 -1 Z"/></g>
<g stroke="#f8f9fd" stroke-width="0.9"><path d="M172.5 1 L175 4.8 M179.4 6.2 L174.8 7.8 M176.7 13.8 L173.6 10.6 M168.3 13.8 L170.2 9.9 M165.6 6.2 L170 6.8"/></g>
<path d="M186 5.5 H194 L190 9.5 Z" fill="#222"/>
<path d="M205 4 H208.5 L210 1.8 H215 L216.5 4 H221 V14.5 H205 Z" fill="#3a8bd1"/><circle cx="213" cy="9" r="3.3" fill="#fff"/><circle cx="213" cy="9" r="2" fill="#3a8bd1"/>
<path d="M232 5 V1 H240 V5" fill="none" stroke="#3a8bd1" stroke-width="1.2"/><rect x="229.5" y="5" width="13.5" height="6.5" rx="1.8" fill="#aecbe8" stroke="#3a8bd1" stroke-width="1.2"/><rect x="232" y="10" width="8.5" height="5" fill="#fff" stroke="#3a8bd1" stroke-width="1.2"/>
</svg>
<svg class="a" style="left:2108px;top:178px;" width="22" height="20" viewBox="0 0 22 20"><defs><linearGradient id="cg" x1="0" y1="0" x2="1" y2="1"><stop offset="0" stop-color="#f4e04a"/><stop offset="0.55" stop-color="#e8c838"/><stop offset="1" stop-color="#3b6fd0"/></linearGradient></defs><path d="M1 4 L17 0.5 L21 15 L4 19.5 Z" fill="#ececec" stroke="#d8d8d8" stroke-width="0.5"/><rect x="4" y="4.5" width="14" height="11" rx="3" fill="#1d3a9a" transform="rotate(-3 11 10)"/><rect x="6" y="6.5" width="10" height="7" rx="1.8" fill="url(#cg)" transform="rotate(-3 11 10)"/><path d="M11.5 6.5 H16 V13.5 H12 Z" fill="#2f5fc8" opacity="0.75" transform="rotate(-3 11 10)"/></svg>
<div class="a" style="left:1341px;top:218px;width:787px;height:671px;border:1px solid #555;box-sizing:border-box;"></div>
<svg class="a" style="left:2149px;top:151px;" width="14" height="14" viewBox="0 0 14 14"><path d="M7 0 V14 M0 7 H14" stroke="#3a8bd1" stroke-width="1.1"/></svg>
<svg class="a" style="left:2165.6px;top:205px;" width="16" height="16" viewBox="0 0 16 16"><g fill="none" stroke="#1e9bbd" stroke-width="1.2"><path d="M0.7 6.8 Q3 2.5 5.6 6.6 L6.4 7.6"/><circle cx="8.8" cy="8.6" r="2.3"/><circle cx="13.6" cy="8.3" r="2.3"/><path d="M11.1 6.2 Q12.3 3.8 14.2 5.6"/></g></svg>
<svg class="a" style="left:2151.6px;top:209px;" width="7" height="7" viewBox="0 0 7 7"><path d="M6.5 0 V6.5 H0 Z" fill="#3a3a3a"/></svg>
<svg class="a" style="left:2185.6px;top:223px;" width="16" height="16" viewBox="0 0 16 16"><path d="M1 1 V15 H15.5" stroke="#7a7a7a" stroke-width="0.8" fill="none"/><path d="M0 2.5 L1 0.5 L2 2.5Z M13.5 14 L15.5 15 L13.5 16Z" fill="#7a7a7a"/><rect x="3" y="9" width="2" height="5" fill="#1e9bbd"/><rect x="6" y="6" width="2" height="8" fill="#1e9bbd"/><rect x="9" y="9.5" width="2" height="4.5" fill="#1e9bbd"/><rect x="12" y="8" width="2" height="6" fill="#1e9bbd"/></svg>
<svg class="a" style="left:2185.6px;top:241px;" width="16" height="16" viewBox="0 0 16 16"><path d="M1.3 1 V14.7 H15.5" stroke="#808080" stroke-width="0.9" fill="none"/><path d="M0.2 2.5 L1.3 0.5 L2.4 2.5Z M14 13.6 L16 14.7 L14 15.8Z" fill="#808080"/><path d="M3 12.7 C5 12.7 5.3 2 7.3 2 C9.3 2 9.3 12.7 11.3 12.7 C13.3 12.7 13.3 2 15.3 2" stroke="#8a8a8a" stroke-width="0.9" fill="none"/><path d="M3 2 C5 2 5.3 12.7 7.3 12.7 C9.3 12.7 9.3 2 11.3 2 C13.3 2 13.3 12.7 15.3 12.7" stroke="#1e9bbd" stroke-width="1.1" fill="none"/></svg>
<svg class="a" style="left:2165.6px;top:259px;" width="16" height="16" viewBox="0 0 16 16"><g fill="none" stroke="#1e9bbd" stroke-width="1.2"><path d="M0.7 6.8 Q3 2.5 5.6 6.6 L6.4 7.6"/><circle cx="8.8" cy="8.6" r="2.3"/><circle cx="13.6" cy="8.3" r="2.3"/><path d="M11.1 6.2 Q12.3 3.8 14.2 5.6"/></g></svg>
<svg class="a" style="left:2151.6px;top:263px;" width="7" height="7" viewBox="0 0 7 7"><path d="M6.5 0 V6.5 H0 Z" fill="#3a3a3a"/></svg>
<svg class="a" style="left:2185.6px;top:277px;" width="16" height="16" viewBox="0 0 16 16"><path d="M1.3 1 V14.7 H15.5" stroke="#808080" stroke-width="0.9" fill="none"/><path d="M0.2 2.5 L1.3 0.5 L2.4 2.5Z M14 13.6 L16 14.7 L14 15.8Z" fill="#808080"/><path d="M3 12.7 C5 12.7 5.3 2 7.3 2 C9.3 2 9.3 12.7 11.3 12.7 C13.3 12.7 13.3 2 15.3 2" stroke="#8a8a8a" stroke-width="0.9" fill="none"/><path d="M3 2 C5 2 5.3 12.7 7.3 12.7 C9.3 12.7 9.3 2 11.3 2 C13.3 2 13.3 12.7 15.3 12.7" stroke="#1e9bbd" stroke-width="1.1" fill="none"/></svg>
<svg class="a" style="left:2185.6px;top:295px;" width="16" height="16" viewBox="0 0 16 16"><path d="M1 1 V15 H15.5" stroke="#7a7a7a" stroke-width="0.9" fill="none"/><path d="M0 2.5 L1 0.5 L2 2.5Z M13.5 14 L15.5 15 L13.5 16Z" fill="#7a7a7a"/><circle cx="8" cy="5.5" r="2.6" fill="none" stroke="#e86a84" stroke-width="1.5"/><circle cx="10.8" cy="8.6" r="2.6" fill="none" stroke="#1e9bbd" stroke-width="1.6"/><circle cx="10.8" cy="8.6" r="1" fill="#1e9bbd" opacity="0.6"/><g fill="none" stroke="#6e6e6e" stroke-width="0.8"><path d="M3.5 1.5 H11 L14.5 5 V12.5 H7 L3.5 9 Z"/><path d="M7 12.5 V5 H14.5 M7 5 L3.5 1.5"/></g></svg>
<svg class="a" style="left:2185.6px;top:313px;" width="16" height="16" viewBox="0 0 16 16"><path d="M1.3 1 V14.7 H15.5" stroke="#808080" stroke-width="0.9" fill="none"/><path d="M0.2 2.5 L1.3 0.5 L2.4 2.5Z M14 13.6 L16 14.7 L14 15.8Z" fill="#808080"/><path d="M3 12.7 C5 12.7 5.3 2 7.3 2 C9.3 2 9.3 12.7 11.3 12.7 C13.3 12.7 13.3 2 15.3 2" stroke="#8a8a8a" stroke-width="0.9" fill="none"/><path d="M3 2 C5 2 5.3 12.7 7.3 12.7 C9.3 12.7 9.3 2 11.3 2 C13.3 2 13.3 12.7 15.3 12.7" stroke="#1e9bbd" stroke-width="1.1" fill="none"/></svg>
<svg class="a" style="left:2185.6px;top:331px;" width="16" height="16" viewBox="0 0 16 16"><path d="M1.3 1 V14.7 H15.5" stroke="#808080" stroke-width="0.9" fill="none"/><path d="M0.2 2.5 L1.3 0.5 L2.4 2.5Z M14 13.6 L16 14.7 L14 15.8Z" fill="#808080"/><path d="M3 12.7 C5 12.7 5.3 2 7.3 2 C9.3 2 9.3 12.7 11.3 12.7 C13.3 12.7 13.3 2 15.3 2" stroke="#8a8a8a" stroke-width="0.9" fill="none"/><path d="M3 2 C5 2 5.3 12.7 7.3 12.7 C9.3 12.7 9.3 2 11.3 2 C13.3 2 13.3 12.7 15.3 12.7" stroke="#1e9bbd" stroke-width="1.1" fill="none"/><path d="M11 9 L15 15 H7 Z" fill="#ccc" stroke="#888" stroke-width="0.6"/></svg>
<svg class="a" style="left:2185.6px;top:349px;" width="16" height="16" viewBox="0 0 16 16"><path d="M1.3 1 V14.7 H15.5" stroke="#808080" stroke-width="0.9" fill="none"/><path d="M0.2 2.5 L1.3 0.5 L2.4 2.5Z M14 13.6 L16 14.7 L14 15.8Z" fill="#808080"/><path d="M3 12.7 C5 12.7 5.3 2 7.3 2 C9.3 2 9.3 12.7 11.3 12.7 C13.3 12.7 13.3 2 15.3 2" stroke="#8a8a8a" stroke-width="0.9" fill="none"/><path d="M3 2 C5 2 5.3 12.7 7.3 12.7 C9.3 12.7 9.3 2 11.3 2 C13.3 2 13.3 12.7 15.3 12.7" stroke="#1e9bbd" stroke-width="1.1" fill="none"/></svg>
<svg class="a" style="left:2185.6px;top:367px;" width="16" height="16" viewBox="0 0 16 16"><path d="M1 1 V15 H15.5" stroke="#7a7a7a" stroke-width="0.9" fill="none"/><path d="M0 2.5 L1 0.5 L2 2.5Z M13.5 14 L15.5 15 L13.5 16Z" fill="#7a7a7a"/><circle cx="8" cy="5.5" r="2.6" fill="none" stroke="#e86a84" stroke-width="1.5"/><circle cx="10.8" cy="8.6" r="2.6" fill="none" stroke="#1e9bbd" stroke-width="1.6"/><circle cx="10.8" cy="8.6" r="1" fill="#1e9bbd" opacity="0.6"/><g fill="none" stroke="#6e6e6e" stroke-width="0.8"><path d="M3.5 1.5 H11 L14.5 5 V12.5 H7 L3.5 9 Z"/><path d="M7 12.5 V5 H14.5 M7 5 L3.5 1.5"/></g></svg>
<svg class="a" style="left:2165.6px;top:385px;" width="16" height="16" viewBox="0 0 16 16"><g fill="none" stroke="#1e9bbd" stroke-width="1.2"><path d="M0.7 6.8 Q3 2.5 5.6 6.6 L6.4 7.6"/><circle cx="8.8" cy="8.6" r="2.3"/><circle cx="13.6" cy="8.3" r="2.3"/><path d="M11.1 6.2 Q12.3 3.8 14.2 5.6"/></g></svg>
<div class="a" style="left:2165px;top:537px;width:1px;height:44px;background:#cfcfcf;"></div>
<div class="a" style="left:2493px;top:537px;width:1px;height:44px;background:#cfcfcf;"></div>
<div class="a" style="left:2146px;top:581px;width:388px;height:1px;background:#b9b9b9;"></div>
<div class="a" style="left:2533px;top:537px;width:1px;height:45px;background:#b9b9b9;"></div>
<svg class="a" style="left:2148px;top:564px;" width="16" height="16" viewBox="0 0 16 16"><path d="M1.3 0.5 V5 M3.3 1.5 V4 M5.3 2.5 V4 M10.7 2.5 V4 M12.7 1.5 V4 M14.7 0.5 V5 M8 2 V8" stroke="#3a8bd1" stroke-width="0.9"/><rect x="1.5" y="8" width="13" height="6.5" rx="1.2" fill="#e4e4e4" stroke="#3a8bd1" stroke-width="1"/><path d="M3.5 10 H12.5" stroke="#3a8bd1" stroke-width="1.4" stroke-dasharray="1 0.6"/><rect x="3" y="14.3" width="1.6" height="1.5" fill="#3a8bd1"/><rect x="11.4" y="14.3" width="1.6" height="1.5" fill="#3a8bd1"/></svg>
<div class="a" style="left:2165px;top:610px;width:1px;height:26px;background:#cfcfcf;"></div>
<div class="a" style="left:2493px;top:610px;width:1px;height:26px;background:#cfcfcf;"></div>
<div class="a" style="left:2533px;top:610px;width:1px;height:27px;background:#b9b9b9;"></div>
<svg class="a" style="left:1344px;top:951px;" width="10" height="9" viewBox="0 0 10 9"><path d="M1 0.5 L9 8.5 M9 0.5 L1 8.5" stroke="#b8bcc8" stroke-width="1"/></svg>
<svg class="a" style="left:1277px;top:974px;" width="14" height="17" viewBox="0 0 14 17"><path d="M1.2 0.3 L4.6 6.5" stroke="#5e5e5e" stroke-width="1.4"/><path d="M3.3 6.3 L6.2 5.2 L11.6 13.2 L9.6 14 L7.6 16 L5.8 14.6 L3.8 15.4 Z" fill="#f2a640"/><path d="M5 7 L7.2 14.5 M6.2 6.5 L9.8 13.6" stroke="#fbd6a0" stroke-width="0.5"/></svg>
<svg class="a" style="left:1297px;top:973px;" width="19" height="19" viewBox="0 0 19 19"><rect x="0.5" y="0.5" width="18" height="18" rx="2" fill="#9fd0f6" stroke="#2d8ee0" stroke-width="1"/><rect x="2" y="2.5" width="13" height="10" fill="#fff" stroke="#2d8ee0" stroke-width="0.8"/><path d="M2 4.5 H15" stroke="#2d8ee0" stroke-width="0.8"/><rect x="5" y="8" width="11.5" height="8" fill="#fff" stroke="#2d8ee0" stroke-width="0.9"/><path d="M5.5 8.5 L10.75 12.5 L16 8.5" stroke="#2d8ee0" stroke-width="0.8" fill="none"/></svg>
<svg class="a" style="left:2520px;top:1002px;" width="10" height="6" viewBox="0 0 10 6"><path d="M1 5 L5 1 L9 5" stroke="#c4c4c4" stroke-width="1" fill="none"/></svg>
<svg class="a" style="left:2520px;top:1198px;" width="10" height="6" viewBox="0 0 10 6"><path d="M1 1 L5 5 L9 1" stroke="#c4c4c4" stroke-width="1" fill="none"/></svg>
<div class="a" style="left:1273px;top:996px;width:1240px;height:12px;overflow:hidden;"><div class="a t" style="left:3px;top:-10px;font-size:12px;line-height:12px;transform:scaleX(0.9592);transform-origin:0 0;">[Mar 28, 2023, 5:01 PM] Finalized geometry has 1 domain, 17 boundaries, 49 edges, and 34 vertices.</div></div>
<svg class="a" style="left:19px;top:32px;" width="18" height="20" viewBox="0 0 18 20"><path d="M1 19.5 L9 0.8 L17 19.5" stroke="#1aa583" stroke-width="2.1" fill="none" stroke-linejoin="miter"/><path d="M4.5 12.5 H13.5" stroke="#1aa583" stroke-width="1.9"/></svg>
<svg class="a" style="left:101px;top:31px;" width="24" height="23" viewBox="0 0 24 23"><path d="M1 1 H17.5 L23 5 V22 H6 L1 17.5 Z" fill="#3a8bd1"/><path d="M1.8 1.8 L6.5 5.5 H22.5 M6.5 5.5 V22" stroke="#fff" stroke-width="0.9" fill="none"/></svg>
<svg class="a" style="left:170px;top:27px;" width="40" height="30" viewBox="0 0 40 30"><g stroke="#3a8bd1" stroke-width="1.2" fill="none" stroke-linejoin="round"><path d="M5.5 15.5 L14.3 5.2 L23.6 4.4 L33.6 15.5 L23.8 25.2 L14.3 24.5 Z"/><path d="M5.5 15.5 H13.6 L23.6 4.4 M13.6 15.5 L23.8 25.2"/><path d="M14.3 5.2 L24.3 15.5 H33.6 M24.3 15.5 L14.3 24.5" opacity="0.55"/></g></svg>
<svg class="a" style="left:266px;top:33px;" width="18" height="19" viewBox="0 0 18 19"><text x="0" y="14" font-size="17" font-family="Liberation Sans" fill="#3a8bd1">P</text><rect x="13" y="7" width="1.8" height="10.5" fill="#3a8bd1"/><rect x="13" y="3.5" width="1.8" height="1.8" fill="#3a8bd1"/></svg>
<svg class="a" style="left:313px;top:28px;" width="16" height="12" viewBox="0 0 16 12"><text x="0" y="11" font-size="13" font-family="Liberation Sans" fill="#3a8bd1">a</text><path d="M9.5 5 H15 M9.5 8 H15" stroke="#3a8bd1" stroke-width="1.1"/></svg>
<svg class="a" style="left:312px;top:50px;" width="18" height="13" viewBox="0 0 18 13"><text x="0" y="10.5" font-size="11" font-family="Liberation Sans" fill="#3a8bd1">f</text><text x="4" y="10.5" font-size="10" font-family="Liberation Sans" fill="#3a8bd1" opacity="0.8">(x)</text></svg>
<svg class="a" style="left:315px;top:72px;" width="12" height="14" viewBox="0 0 12 14"><text x="0" y="9.5" font-size="11" font-family="Liberation Sans" fill="#a9cbe9">P</text><rect x="8" y="6" width="1.2" height="8" fill="#a9cbe9"/></svg>
<svg class="a" style="left:443px;top:33px;" width="21" height="21" viewBox="0 0 21 21"><path d="M1 1.5 H16 L20 4 V20 H4 L1 17 Z" fill="#e0603e"/><path d="M4 4.5 H20 M4 4.5 V20 M4 4.5 L1.5 2 M12 4.5 V20 M4 12 H20 M8 2.5 L12 4.5" stroke="#f8d8c8" stroke-width="0.8" fill="none"/></svg>
<svg class="a" style="left:478px;top:28px;" width="16" height="14" viewBox="0 0 16 14"><rect x="0.5" y="1" width="13" height="11" rx="1" fill="#fff" stroke="#777" stroke-width="1"/><path d="M0.5 3.5 H13.5 M3 3.5 V12" stroke="#777" stroke-width="0.9"/><path d="M15.5 7.5 H7" stroke="#e4572e" stroke-width="1.6"/><path d="M8.5 4.5 L5 7.5 L8.5 10.5 Z" fill="#e4572e"/></svg>
<svg class="a" style="left:478px;top:50px;" width="18" height="14" viewBox="0 0 18 14"><path d="M6.5 3.5 H2 V9.5 H6 M11.5 10.5 H16 V4.5 H12" stroke="#e4572e" stroke-width="2" fill="none"/><path d="M6 0.5 L9.5 3.5 L6 6.5 Z M12 7.5 L8.5 10.5 L12 13.5 Z" fill="#e4572e"/></svg>
<svg class="a" style="left:582px;top:31px;" width="28" height="28" viewBox="0 0 28 28"><g><rect x="1" y="6" width="6" height="6" rx="1.5" fill="#f0a23c"/><rect x="8" y="1" width="6" height="6" rx="1.5" fill="#f0a23c"/><rect x="15" y="5" width="6" height="6" rx="1.5" fill="#f0a23c"/>
<rect x="1" y="13" width="6" height="6" rx="1.5" fill="#f0a23c"/><rect x="8" y="8" width="6" height="6" rx="1.5" fill="#eb9a30"/><rect x="15" y="12" width="6" height="6" rx="1.5" fill="#d9811e"/><rect x="8" y="15" width="6" height="6" rx="1.5" fill="#d9811e"/></g>
<path d="M22 15 V25 M18.5 21.5 L22 25 L25.5 21.5 M18 27.5 H26" stroke="#888" stroke-width="1.2" fill="none"/></svg>
<svg class="a" style="left:686px;top:27px;" width="27" height="32" viewBox="0 0 27 32"><path d="M1.4 1 V10.8 M4.2 2.5 V9.5 M7.4 3.5 V8.5 M10.4 4.6 V7.5 M16.6 4.6 V7.5 M19.5 3.5 V8.5 M22.8 2.5 V9.5 M25.6 1 V10.8 M13.5 5 V14" stroke="#3a8bd1" stroke-width="1.1"/>
<rect x="1" y="14" width="25" height="13.5" rx="2" fill="#e8e8e8" stroke="#3a8bd1" stroke-width="1.2"/><rect x="4.5" y="17" width="18" height="3" fill="#3a8bd1"/><path d="M5.5 18.5 H21.5" stroke="#fff" stroke-width="0.8" stroke-dasharray="0.8 1.2"/>
<rect x="4.5" y="22.5" width="2.5" height="2.5" fill="none" stroke="#3a8bd1" stroke-width="1"/><rect x="19.5" y="22.5" width="2.5" height="2.5" fill="none" stroke="#3a8bd1" stroke-width="1"/><rect x="3.5" y="27.5" width="2.5" height="3" fill="#3a8bd1"/><rect x="20.5" y="27.5" width="2.5" height="3" fill="#3a8bd1"/></svg>
<svg class="a" style="left:777px;top:27px;" width="30" height="33" viewBox="0 0 30 33"><g fill="none" stroke="#8e8e8e" stroke-width="1.1"><ellipse cx="14" cy="15" rx="4" ry="14"/><ellipse cx="14" cy="15" rx="4" ry="14" transform="rotate(60 14 15)"/><ellipse cx="14" cy="15" rx="4" ry="14" transform="rotate(-60 14 15)"/></g>
<circle cx="14" cy="15" r="2.2" fill="#3a8bd1"/><circle cx="5" cy="7" r="1.8" fill="#3a8bd1"/><circle cx="24" cy="12" r="1.8" fill="#3a8bd1"/><circle cx="10" cy="24" r="1.8" fill="#3a8bd1"/>
<path d="M24.5 19 V28 M20.5 24.5 L24.5 28.5 L28.5 24.5 Z M20 31.5 H29" stroke="#3a8bd1" stroke-width="1.6" fill="#3a8bd1"/></svg>
<svg class="a" style="left:839px;top:33px;" width="21" height="21" viewBox="0 0 21 21"><path d="M1 1.5 H16 L20 4 V20 H4 L1 17 Z" fill="#7b7b7b"/><path d="M4 4.5 H20 M4 4.5 V20 M4 4.5 L1.5 2 M12 4.5 V20 M4 12 H20 M8 2.5 L12 4.5" stroke="#d8d8d8" stroke-width="0.8" fill="none"/></svg>
<svg class="a" style="left:877px;top:28px;" width="32" height="29" viewBox="0 0 32 29"><path d="M16 1.2 L31 28 H1 Z" fill="#e2e2e2" stroke="#7c7c7c" stroke-width="1.6"/><g stroke="#8e8e8e" stroke-width="0.8" fill="none"><path d="M12.25 7.9 H19.75 M8.5 14.6 H23.5 M4.75 21.3 H27.25 M16 1.5 L8.5 28 M16 1.5 L23.5 28 M12.25 7.9 L23.5 28 M19.75 7.9 L8.5 28 M8.5 14.6 L16 28 M23.5 14.6 L16 28 M4.75 21.3 L8.5 28 M27.25 21.3 L23.5 28"/></g></svg>
<svg class="a" style="left:948px;top:37px;" width="20" height="13" viewBox="0 0 20 13"><rect x="0.5" y="0.5" width="18" height="4" fill="#1e9bbd"/><rect x="0.5" y="7.5" width="18" height="4" fill="#1e9bbd"/></svg>
<svg class="a" style="left:992px;top:35px;" width="32" height="16" viewBox="0 0 32 16"><g fill="none" stroke="#1e9bbd" stroke-width="1.4"><path d="M1 6 Q5 0.5 10 7.5"/><circle cx="14.5" cy="10" r="4.5"/><circle cx="26" cy="9" r="4.5"/><path d="M19 10 Q20 8.5 21.5 9.5 M18.5 4 Q22 0 27 3.5"/></g></svg>
<svg class="a" style="left:1036px;top:29px;" width="32" height="16" viewBox="0 0 32 16"><g fill="none" stroke="#1e9bbd" stroke-width="1.4"><path d="M1 6 Q5 0.5 10 7.5"/><circle cx="14.5" cy="10" r="4.5"/><circle cx="26" cy="9" r="4.5"/><path d="M19 10 Q20 8.5 21.5 9.5 M18.5 4 Q22 0 27 3.5"/></g></svg>
<svg class="a" style="left:1057px;top:47px;" width="11" height="13" viewBox="0 0 11 13"><path d="M5.5 0 V8" stroke="#1e9bbd" stroke-width="1.6"/><path d="M1.5 5.5 L5.5 9.5 L9.5 5.5 Z" fill="#1e9bbd"/><path d="M0.5 11.5 H10.5" stroke="#1e9bbd" stroke-width="1.3"/></svg>
<svg class="a" style="left:1110px;top:35px;" width="31" height="16" viewBox="0 0 31 16"><path d="M1 6 Q4.5 1 8 2.5 Q11.5 4 15.5 11 Q19 15.5 23 13.5 Q27 11.5 29.5 8" stroke="#b5509e" stroke-width="1.4" fill="none"/></svg>
<svg class="a" style="left:1174px;top:29px;" width="31" height="29" viewBox="0 0 31 29"><path d="M1 14 V19 L9 26 H9 Z" fill="#8a8a8a"/><path d="M1 13 L9.5 19 V26 L1 19.5 Z" fill="#8e8e8e"/>
<rect x="4.5" y="1" width="14" height="13" fill="#fff" stroke="#888" stroke-width="0.9"/><rect x="6" y="2.5" width="11" height="8" fill="#b0509e"/>
<rect x="8.5" y="3.5" width="14" height="13" fill="#fff" stroke="#888" stroke-width="0.9"/><rect x="10" y="5" width="11" height="8" fill="#b0509e"/>
<rect x="12.5" y="6" width="14" height="14" fill="#fff" stroke="#888" stroke-width="0.9"/><rect x="14.5" y="8" width="10" height="8" fill="#b0509e"/>
<rect x="9.5" y="20.5" width="20" height="6" fill="#fff" stroke="#888" stroke-width="0.9"/></svg>
<svg class="a" style="left:1244px;top:29px;" width="33" height="26" viewBox="0 0 33 26"><rect x="1" y="1" width="24" height="17" fill="#fff" stroke="#3a8bd1" stroke-width="1.2"/><rect x="1.5" y="1.5" width="23" height="2.5" fill="#a8c8e8"/><rect x="9.5" y="8.5" width="22" height="16" fill="#fff" stroke="#3a8bd1" stroke-width="1.2"/><rect x="10" y="9" width="21" height="2.5" fill="#a8c8e8"/></svg>
<svg class="a" style="left:1303px;top:32px;" width="28" height="22" viewBox="0 0 28 22"><rect x="1" y="1" width="25.5" height="19.5" fill="#fff" stroke="#3a8bd1" stroke-width="1.2"/><rect x="1.5" y="1.5" width="24.5" height="2.5" fill="#a8c8e8"/><path d="M17.5 8.5 A5 5 0 1 0 18.5 13" stroke="#3a8bd1" stroke-width="1.3" fill="none"/><path d="M15 6 L19.5 6.5 L18.5 10.5 Z" fill="#3a8bd1"/></svg>
<div class="a t" style="left:1270px;top:526px;font-size:13px;line-height:13px;color:#222;transform:rotate(-90deg);transform-origin:0 0;">(dB)</div>
<svg class="a" style="left:1732px;top:228px;" width="5" height="5" viewBox="0 0 5 5"><circle cx="2.5" cy="2.5" r="1.6" fill="#00b000"/></svg>
<svg class="a" style="left:1732px;top:876px;" width="5" height="5" viewBox="0 0 5 5"><circle cx="2.5" cy="2.5" r="1.6" fill="#1020ff"/></svg>
<div class="a" style="left:2040px;top:235px;width:73px;height:45px;background:#777;"></div>
<svg class="a" style="left:2506px;top:565px;" width="15" height="15" viewBox="0 0 15 15"><rect x="0.5" y="1.5" width="12" height="12" fill="#fff" stroke="#3a8bd1" stroke-width="1"/><path d="M2.5 6 L6 9.5 L14 1" stroke="#3a8bd1" stroke-width="1.2" fill="none"/></svg>
<svg class="a" style="left:274.0px;top:79px;" width="7" height="4" viewBox="0 0 7 4"><path d="M0 0 H7 L3.5 3.8 Z" fill="#111"/></svg>
<svg class="a" style="left:380.0px;top:32px;" width="7" height="4" viewBox="0 0 7 4"><path d="M0 0 H7 L3.5 3.8 Z" fill="#111"/></svg>
<svg class="a" style="left:386.0px;top:54px;" width="7" height="4" viewBox="0 0 7 4"><path d="M0 0 H7 L3.5 3.8 Z" fill="#111"/></svg>
<svg class="a" style="left:543.5px;top:54px;" width="7" height="4" viewBox="0 0 7 4"><path d="M0 0 H7 L3.5 3.8 Z" fill="#111"/></svg>
<svg class="a" style="left:748.5px;top:79px;" width="7" height="4" viewBox="0 0 7 4"><path d="M0 0 H7 L3.5 3.8 Z" fill="#111"/></svg>
<svg class="a" style="left:895.0px;top:79px;" width="7" height="4" viewBox="0 0 7 4"><path d="M0 0 H7 L3.5 3.8 Z" fill="#111"/></svg>
<svg class="a" style="left:1010.0px;top:79px;" width="7" height="4" viewBox="0 0 7 4"><path d="M0 0 H7 L3.5 3.8 Z" fill="#111"/></svg>
<svg class="a" style="left:1140.0px;top:79px;" width="7" height="4" viewBox="0 0 7 4"><path d="M0 0 H7 L3.5 3.8 Z" fill="#111"/></svg>
<svg class="a" style="left:1205.0px;top:79px;" width="7" height="4" viewBox="0 0 7 4"><path d="M0 0 H7 L3.5 3.8 Z" fill="#111"/></svg>
<svg class="a" style="left:1256.5px;top:79px;" width="7" height="4" viewBox="0 0 7 4"><path d="M0 0 H7 L3.5 3.8 Z" fill="#111"/></svg>
<svg class="a" style="left:1337.0px;top:79px;" width="7" height="4" viewBox="0 0 7 4"><path d="M0 0 H7 L3.5 3.8 Z" fill="#111"/></svg>
<svg class="a" style="left:114.5px;top:79px;" width="7" height="4" viewBox="0 0 7 4"><path d="M0 0 H7 L3.5 3.8 Z" fill="#111"/></svg>
<svg class="a" style="left:220.0px;top:79px;" width="7" height="4" viewBox="0 0 7 4"><path d="M0 0 H7 L3.5 3.8 Z" fill="#111"/></svg>
<div class="a t" style="left:5.0px;top:3px;font-size:12px;line-height:12px;color:#ffffff;transform:scaleX(0.9564);transform-origin:0 0;">File</div>
<div class="a t" style="left:52.0px;top:3px;font-size:12px;line-height:12px;color:#3d86d8;transform:scaleX(1.0307);transform-origin:0 0;">Home</div>
<div class="a t" style="left:105.0px;top:3px;font-size:12px;line-height:12px;transform:scaleX(1.0173);transform-origin:0 0;">Definitions</div>
<div class="a t" style="left:182.0px;top:3px;font-size:12px;line-height:12px;transform:scaleX(0.9964);transform-origin:0 0;">Geometry</div>
<div class="a t" style="left:254.0px;top:3px;font-size:12px;line-height:12px;transform:scaleX(0.9961);transform-origin:0 0;">Materials</div>
<div class="a t" style="left:322.0px;top:3px;font-size:12px;line-height:12px;transform:scaleX(0.9433);transform-origin:0 0;">Physics</div>
<div class="a t" style="left:381.0px;top:3px;font-size:12px;line-height:12px;transform:scaleX(0.9883);transform-origin:0 0;">Mesh</div>
<div class="a t" style="left:430.0px;top:3px;font-size:12px;line-height:12px;transform:scaleX(0.9776);transform-origin:0 0;">Study</div>
<div class="a t" style="left:480.0px;top:3px;font-size:12px;line-height:12px;transform:scaleX(0.9246);transform-origin:0 0;">Results</div>
<div class="a t" style="left:537.0px;top:3px;font-size:12px;line-height:12px;transform:scaleX(0.9689);transform-origin:0 0;">Developer</div>
<div class="a t" style="left:2523.5px;top:0px;font-size:14px;line-height:14px;color:#fff;transform:scaleX(1.0261);transform-origin:0 0;">?</div>
<div class="a t" style="left:-1.9px;top:94px;font-size:12px;line-height:12px;color:#6e6e6e;">Workspace</div>
<div class="a t" style="left:136.7px;top:94px;font-size:12px;line-height:12px;color:#6e6e6e;">Model</div>
<div class="a t" style="left:303.0px;top:94px;font-size:12px;line-height:12px;color:#6e6e6e;">Definitions</div>
<div class="a t" style="left:466.7px;top:94px;font-size:12px;line-height:12px;color:#6e6e6e;">Geometry</div>
<div class="a t" style="left:567.7px;top:94px;font-size:12px;line-height:12px;color:#6e6e6e;">Materials</div>
<div class="a t" style="left:701.3px;top:94px;font-size:12px;line-height:12px;color:#6e6e6e;">Physics</div>
<div class="a t" style="left:856.3px;top:94px;font-size:12px;line-height:12px;color:#6e6e6e;">Mesh</div>
<div class="a t" style="left:986.7px;top:94px;font-size:12px;line-height:12px;color:#6e6e6e;">Study</div>
<div class="a t" style="left:1133.0px;top:94px;font-size:12px;line-height:12px;color:#6e6e6e;">Results</div>
<div class="a t" style="left:1271.0px;top:94px;font-size:12px;line-height:12px;color:#6e6e6e;">Layout</div>
<div class="a t" style="left:-1.4px;top:62px;font-size:12px;line-height:12px;">Application</div>
<div class="a t" style="left:9.3px;top:75px;font-size:12px;line-height:12px;">Builder</div>
<div class="a t" style="left:81.0px;top:62px;font-size:12px;line-height:12px;">Component</div>
<div class="a t" style="left:104.7px;top:75px;font-size:12px;line-height:12px;">1</div>
<div class="a t" style="left:178.3px;top:62px;font-size:12px;line-height:12px;">Add</div>
<div class="a t" style="left:154.0px;top:75px;font-size:12px;line-height:12px;">Component</div>
<div class="a t" style="left:246.0px;top:62px;font-size:12px;line-height:12px;">Parameters</div>
<div class="a t" style="left:439.7px;top:62px;font-size:12px;line-height:12px;">Build</div>
<div class="a t" style="left:446.3px;top:75px;font-size:12px;line-height:12px;">All</div>
<div class="a t" style="left:580.3px;top:62px;font-size:12px;line-height:12px;">Add</div>
<div class="a t" style="left:569.7px;top:75px;font-size:12px;line-height:12px;">Material</div>
<div class="a t" style="left:632.5px;top:62px;font-size:12px;line-height:12px;">Electromagnetic Waves,</div>
<div class="a t" style="left:642.8px;top:75px;font-size:12px;line-height:12px;">Frequency Domain</div>
<div class="a t" style="left:778.3px;top:62px;font-size:12px;line-height:12px;">Add</div>
<div class="a t" style="left:768.3px;top:75px;font-size:12px;line-height:12px;">Physics</div>
<div class="a t" style="left:835.7px;top:62px;font-size:12px;line-height:12px;">Build</div>
<div class="a t" style="left:834.3px;top:75px;font-size:12px;line-height:12px;">Mesh</div>
<div class="a t" style="left:878.3px;top:62px;font-size:12px;line-height:12px;">Mesh</div>
<div class="a t" style="left:885.2px;top:75px;font-size:12px;line-height:12px;">1</div>
<div class="a t" style="left:933.6px;top:62px;font-size:12px;line-height:12px;">Compute</div>
<div class="a t" style="left:991.7px;top:62px;font-size:12px;line-height:12px;">Study</div>
<div class="a t" style="left:1001.2px;top:75px;font-size:12px;line-height:12px;">1</div>
<div class="a t" style="left:1040.3px;top:62px;font-size:12px;line-height:12px;">Add</div>
<div class="a t" style="left:1035.7px;top:75px;font-size:12px;line-height:12px;">Study</div>
<div class="a t" style="left:1089.6px;top:62px;font-size:12px;line-height:12px;">S-parameter</div>
<div class="a t" style="left:1103.3px;top:75px;font-size:12px;line-height:12px;">(emw)</div>
<div class="a t" style="left:1165.3px;top:62px;font-size:12px;line-height:12px;">Add Plot</div>
<div class="a t" style="left:1167.8px;top:75px;font-size:12px;line-height:12px;">Group</div>
<div class="a t" style="left:1235.7px;top:62px;font-size:12px;line-height:12px;">Windows</div>
<div class="a t" style="left:1299.3px;top:62px;font-size:12px;line-height:12px;">Reset</div>
<div class="a t" style="left:1290.0px;top:75px;font-size:12px;line-height:12px;">Desktop</div>
<div class="a t" style="left:331.0px;top:28px;font-size:12px;line-height:12px;transform:scaleX(0.9463);transform-origin:0 0;">Variables</div>
<div class="a t" style="left:331.0px;top:50px;font-size:12px;line-height:12px;">Functions</div>
<div class="a t" style="left:331.0px;top:72px;font-size:12px;line-height:12px;color:#a3a3a3;">Parameter Case</div>
<div class="a t" style="left:498.0px;top:28px;font-size:12px;line-height:12px;transform:scaleX(1.0289);transform-origin:0 0;">Import</div>
<div class="a t" style="left:498.0px;top:50px;font-size:12px;line-height:12px;transform:scaleX(0.9539);transform-origin:0 0;">LiveLink</div>
<div class="a t" style="left:1863.0px;top:1229px;font-size:12px;line-height:12px;transform:scaleX(0.8790);transform-origin:0 0;">1.54 GB | 1.99 GB</div>
<div class="a t" style="left:53.0px;top:175px;font-size:12px;line-height:12px;transform:scaleX(0.9750);transform-origin:0 0;">Component 1</div>
<div class="a t" style="left:128.7px;top:175px;font-size:12px;line-height:12px;font-style:italic;transform:scaleX(0.95);transform-origin:0 0;">(comp1)</div>
<div class="a t" style="left:73.0px;top:193px;font-size:12px;line-height:12px;transform:scaleX(0.9750);transform-origin:0 0;">Definitions</div>
<div class="a t" style="left:93.0px;top:211px;font-size:12px;line-height:12px;transform:scaleX(0.9750);transform-origin:0 0;">Boundary System 1</div>
<div class="a t" style="left:200.6px;top:211px;font-size:12px;line-height:12px;font-style:italic;transform:scaleX(0.95);transform-origin:0 0;">(sys1)</div>
<div class="a t" style="left:93.0px;top:229px;font-size:12px;line-height:12px;transform:scaleX(0.9750);transform-origin:0 0;">View 1</div>
<div class="a t" style="left:73.0px;top:247px;font-size:12px;line-height:12px;transform:scaleX(0.9750);transform-origin:0 0;">Geometry 1</div>
<div class="a t" style="left:93.0px;top:265px;font-size:12px;line-height:12px;transform:scaleX(0.9750);transform-origin:0 0;">Substrate</div>
<div class="a t" style="left:148.6px;top:265px;font-size:12px;line-height:12px;font-style:italic;transform:scaleX(0.95);transform-origin:0 0;">(blk1)</div>
<div class="a t" style="left:93.0px;top:283px;font-size:12px;line-height:12px;transform:scaleX(0.9750);transform-origin:0 0;">Substrate Top</div>
<div class="a t" style="left:170.5px;top:283px;font-size:12px;line-height:12px;font-style:italic;transform:scaleX(0.95);transform-origin:0 0;">(wp1)</div>
<div class="a t" style="left:113.0px;top:301px;font-size:12px;line-height:12px;transform:scaleX(0.9750);transform-origin:0 0;">Plane Geometry</div>
<div class="a t" style="left:133.0px;top:319px;font-size:12px;line-height:12px;transform:scaleX(0.9750);transform-origin:0 0;">Feedline</div>
<div class="a t" style="left:183.4px;top:319px;font-size:12px;line-height:12px;font-style:italic;transform:scaleX(0.95);transform-origin:0 0;">(r1)</div>
<div class="a t" style="left:133.0px;top:337px;font-size:12px;line-height:12px;transform:scaleX(0.9750);transform-origin:0 0;">Feedline2</div>
<div class="a t" style="left:189.9px;top:337px;font-size:12px;line-height:12px;font-style:italic;transform:scaleX(0.95);transform-origin:0 0;">(r2)</div>
<div class="a t" style="left:133.0px;top:355px;font-size:12px;line-height:12px;transform:scaleX(0.9750);transform-origin:0 0;">C1</div>
<div class="a t" style="left:153.5px;top:355px;font-size:12px;line-height:12px;font-style:italic;transform:scaleX(0.95);transform-origin:0 0;">(r3)</div>
<div class="a t" style="left:133.0px;top:373px;font-size:12px;line-height:12px;transform:scaleX(0.9750);transform-origin:0 0;">C2</div>
<div class="a t" style="left:153.5px;top:373px;font-size:12px;line-height:12px;font-style:italic;transform:scaleX(0.95);transform-origin:0 0;">(r4)</div>
<div class="a t" style="left:133.0px;top:391px;font-size:12px;line-height:12px;transform:scaleX(0.9750);transform-origin:0 0;">L</div>
<div class="a t" style="left:145.0px;top:391px;font-size:12px;line-height:12px;font-style:italic;transform:scaleX(0.95);transform-origin:0 0;">(r5)</div>
<div class="a t" style="left:113.0px;top:409px;font-size:12px;line-height:12px;transform:scaleX(0.9750);transform-origin:0 0;">View 2</div>
<div class="a t" style="left:93.0px;top:427px;font-size:12px;line-height:12px;transform:scaleX(0.9750);transform-origin:0 0;">Work Plane 2</div>
<div class="a t" style="left:168.5px;top:427px;font-size:12px;line-height:12px;font-style:italic;transform:scaleX(0.95);transform-origin:0 0;">(wp2)</div>
<div class="a t" style="left:113.0px;top:445px;font-size:12px;line-height:12px;transform:scaleX(0.9750);transform-origin:0 0;">Plane Geometry</div>
<div class="a t" style="left:133.0px;top:463px;font-size:12px;line-height:12px;transform:scaleX(0.9750);transform-origin:0 0;">Input Port</div>
<div class="a t" style="left:189.2px;top:463px;font-size:12px;line-height:12px;font-style:italic;transform:scaleX(0.95);transform-origin:0 0;">(r1)</div>
<div class="a t" style="left:113.0px;top:481px;font-size:12px;line-height:12px;transform:scaleX(0.9750);transform-origin:0 0;">View 3</div>
<div class="a t" style="left:93.0px;top:499px;font-size:12px;line-height:12px;transform:scaleX(0.9750);transform-origin:0 0;">Work Plane 3</div>
<div class="a t" style="left:168.5px;top:499px;font-size:12px;line-height:12px;font-style:italic;transform:scaleX(0.95);transform-origin:0 0;">(wp3)</div>
<div class="a t" style="left:113.0px;top:517px;font-size:12px;line-height:12px;transform:scaleX(0.9750);transform-origin:0 0;">Plane Geometry</div>
<div class="a t" style="left:133.0px;top:535px;font-size:12px;line-height:12px;transform:scaleX(0.9750);transform-origin:0 0;">Output Port</div>
<div class="a t" style="left:198.3px;top:535px;font-size:12px;line-height:12px;font-style:italic;transform:scaleX(0.95);transform-origin:0 0;">(r1)</div>
<div class="a t" style="left:113.0px;top:553px;font-size:12px;line-height:12px;transform:scaleX(0.9750);transform-origin:0 0;">View 4</div>
<div class="a t" style="left:93.0px;top:571px;font-size:12px;line-height:12px;transform:scaleX(0.9750);transform-origin:0 0;">Form Union</div>
<div class="a t" style="left:159.6px;top:571px;font-size:12px;line-height:12px;font-style:italic;transform:scaleX(0.95);transform-origin:0 0;">(fin)</div>
<div class="a t" style="left:73.0px;top:589px;font-size:12px;line-height:12px;transform:scaleX(0.9750);transform-origin:0 0;">Materials</div>
<div class="a t" style="left:93.0px;top:607px;font-size:12px;line-height:12px;transform:scaleX(0.9750);transform-origin:0 0;">Material 1</div>
<div class="a t" style="left:149.9px;top:607px;font-size:12px;line-height:12px;font-style:italic;transform:scaleX(0.95);transform-origin:0 0;">(mat1)</div>
<div class="a t" style="left:73.0px;top:625px;font-size:12px;line-height:12px;transform:scaleX(0.9750);transform-origin:0 0;">Electromagnetic Waves, Frequency Domain</div>
<div class="a t" style="left:306.3px;top:625px;font-size:12px;line-height:12px;font-style:italic;transform:scaleX(0.95);transform-origin:0 0;">(emw)</div>
<div class="a t" style="left:93.0px;top:643px;font-size:12px;line-height:12px;transform:scaleX(0.9750);transform-origin:0 0;">Wave Equation, Electric 1</div>
<div class="a t" style="left:93.0px;top:661px;font-size:12px;line-height:12px;transform:scaleX(0.9750);transform-origin:0 0;">Perfect Electric Conductor 1</div>
<div class="a t" style="left:93.0px;top:679px;font-size:12px;line-height:12px;transform:scaleX(0.9750);transform-origin:0 0;">Initial Values 1</div>
<div class="a t" style="left:93.0px;top:697px;font-size:12px;line-height:12px;transform:scaleX(0.9750);transform-origin:0 0;">Perfect Magnetic Conductor 1</div>
<div class="a t" style="left:93.0px;top:715px;font-size:12px;line-height:12px;transform:scaleX(0.9750);transform-origin:0 0;">Perfect Electric Conductor 2</div>
<div class="a t" style="left:93.0px;top:733px;font-size:12px;line-height:12px;transform:scaleX(0.9750);transform-origin:0 0;">Lumped Port 1 (input)</div>
<div class="a t" style="left:93.0px;top:751px;font-size:12px;line-height:12px;transform:scaleX(0.9750);transform-origin:0 0;">Lumped Port 2</div>
<div class="a t" style="left:73.0px;top:769px;font-size:12px;line-height:12px;transform:scaleX(0.9750);transform-origin:0 0;">Mesh 1</div>
<div class="a t" style="left:93.0px;top:787px;font-size:12px;line-height:12px;transform:scaleX(0.9750);transform-origin:0 0;">Size</div>
<div class="a t" style="left:93.0px;top:805px;font-size:12px;line-height:12px;transform:scaleX(0.9750);transform-origin:0 0;">Free Tetrahedral 1</div>
<div class="a t" style="left:113.0px;top:823px;font-size:12px;line-height:12px;transform:scaleX(0.9750);transform-origin:0 0;">Size 1</div>
<div class="a t" style="left:113.0px;top:841px;font-size:12px;line-height:12px;transform:scaleX(0.9750);transform-origin:0 0;">Information 1</div>
<div class="a t" style="left:113.0px;top:859px;font-size:12px;line-height:12px;transform:scaleX(0.9750);transform-origin:0 0;">Information 2</div>
<div class="a t" style="left:93.0px;top:877px;font-size:12px;line-height:12px;transform:scaleX(0.9750);transform-origin:0 0;">Free Tetrahedral 2</div>
<div class="a t" style="left:113.0px;top:895px;font-size:12px;line-height:12px;transform:scaleX(0.9750);transform-origin:0 0;">Size 1</div>
<div class="a t" style="left:53.0px;top:913px;font-size:12px;line-height:12px;transform:scaleX(0.9750);transform-origin:0 0;">Study 1</div>
<div class="a t" style="left:73.0px;top:931px;font-size:12px;line-height:12px;transform:scaleX(0.9750);transform-origin:0 0;">Step 1: Frequency Domain</div>
<div class="a t" style="left:73.0px;top:949px;font-size:12px;line-height:12px;transform:scaleX(0.9750);transform-origin:0 0;">Solver Configurations</div>
<div class="a t" style="left:93.0px;top:967px;font-size:12px;line-height:12px;transform:scaleX(0.9750);transform-origin:0 0;">Solution 1</div>
<div class="a t" style="left:150.5px;top:967px;font-size:12px;line-height:12px;font-style:italic;transform:scaleX(0.95);transform-origin:0 0;">(sol1)</div>
<div class="a t" style="left:113.0px;top:985px;font-size:12px;line-height:12px;transform:scaleX(0.9750);transform-origin:0 0;">Compile Equations: Frequency Domain</div>
<div class="a t" style="left:113.0px;top:1003px;font-size:12px;line-height:12px;transform:scaleX(0.9750);transform-origin:0 0;">Dependent Variables 1</div>
<div class="a t" style="left:113.0px;top:1021px;font-size:12px;line-height:12px;transform:scaleX(0.9750);transform-origin:0 0;">Stationary Solver 1</div>
<div class="a t" style="left:133.0px;top:1039px;font-size:12px;line-height:12px;color:#8c8c8c;transform:scaleX(0.9750);transform-origin:0 0;">Direct</div>
<div class="a t" style="left:133.0px;top:1057px;font-size:12px;line-height:12px;transform:scaleX(0.9750);transform-origin:0 0;">Advanced</div>
<div class="a t" style="left:133.0px;top:1075px;font-size:12px;line-height:12px;transform:scaleX(0.9750);transform-origin:0 0;">Parametric 1</div>
<div class="a t" style="left:133.0px;top:1093px;font-size:12px;line-height:12px;transform:scaleX(0.9750);transform-origin:0 0;">Fully Coupled 1</div>
<div class="a t" style="left:133.0px;top:1111px;font-size:12px;line-height:12px;transform:scaleX(0.9750);transform-origin:0 0;">Suggested Iterative Solver (emw)</div>
<div class="a t" style="left:133.0px;top:1129px;font-size:12px;line-height:12px;transform:scaleX(0.9750);transform-origin:0 0;">Error 1</div>
<div class="a t" style="left:53.0px;top:1147px;font-size:12px;line-height:12px;transform:scaleX(0.9750);transform-origin:0 0;">Results</div>
<div class="a t" style="left:73.0px;top:1165px;font-size:12px;line-height:12px;transform:scaleX(0.9750);transform-origin:0 0;">Datasets</div>
<div class="a t" style="left:73.0px;top:1183px;font-size:12px;line-height:12px;transform:scaleX(0.9750);transform-origin:0 0;">Derived Values</div>
<div class="a t" style="left:73.0px;top:1201px;font-size:12px;line-height:12px;transform:scaleX(0.9750);transform-origin:0 0;">Tables</div>
<div class="a t" style="left:-1.0px;top:124px;font-size:22px;line-height:22px;color:#2557a7;transform:scaleX(0.8624);transform-origin:0 0;-webkit-text-stroke:0.45px #f8f9fd;">Model Builder</div>
<div class="a t" style="left:559.0px;top:124px;font-size:22px;line-height:22px;color:#2557a7;transform:scaleX(0.8428);transform-origin:0 0;-webkit-text-stroke:0.45px #f8f9fd;">Settings</div>
<div class="a t" style="left:558.0px;top:153px;font-size:15px;line-height:15px;color:#2557a7;transform:scaleX(0.8997);transform-origin:0 0;-webkit-text-stroke:0.3px #f8f9fd;">Error</div>
<div class="a t" style="left:579.0px;top:174px;font-size:12px;line-height:12px;transform:scaleX(0.9815);transform-origin:0 0;">Compute to Selected</div>
<div class="a t" style="left:716.0px;top:174px;font-size:12px;line-height:12px;transform:scaleX(1.0266);transform-origin:0 0;">Compute</div>
<div class="a t" style="left:577.0px;top:200px;font-size:12px;line-height:12px;transform:scaleX(1.1248);transform-origin:0 0;">Error</div>
<div class="a t" style="left:558.0px;top:229px;font-size:12px;line-height:12px;">Failed to find a solution for the initial parameter.</div>
<div class="a t" style="left:558.0px;top:244px;font-size:12px;line-height:12px;">Divergence of the linear iterations.</div>
<div class="a t" style="left:558.0px;top:259px;font-size:12px;line-height:12px;">Returned solution is not converged.</div>
<div class="a t" style="left:558.0px;top:274px;font-size:12px;line-height:12px;">Not all parameter steps returned.</div>
<div class="a t" style="left:1277.0px;top:128px;font-size:13px;line-height:13px;color:#2d8ae0;transform:scaleX(0.9610);transform-origin:0 0;">Graphics</div>
<div class="a t" style="left:1345.0px;top:128px;font-size:12px;line-height:12px;transform:scaleX(1.0626);transform-origin:0 0;">Convergence Plot 1</div>
<div class="a t" style="left:1349.3px;top:896px;font-size:13px;line-height:13px;color:#222;">0</div>
<div class="a t" style="left:1420.3px;top:896px;font-size:13px;line-height:13px;color:#222;">0.2</div>
<div class="a t" style="left:1496.6px;top:896px;font-size:13px;line-height:13px;color:#222;">0.4</div>
<div class="a t" style="left:1573.0px;top:896px;font-size:13px;line-height:13px;color:#222;">0.6</div>
<div class="a t" style="left:1649.4px;top:896px;font-size:13px;line-height:13px;color:#222;">0.8</div>
<div class="a t" style="left:1731.2px;top:896px;font-size:13px;line-height:13px;color:#222;">1</div>
<div class="a t" style="left:1802.2px;top:896px;font-size:13px;line-height:13px;color:#222;">1.2</div>
<div class="a t" style="left:1878.6px;top:896px;font-size:13px;line-height:13px;color:#222;">1.4</div>
<div class="a t" style="left:1955.0px;top:896px;font-size:13px;line-height:13px;color:#222;">1.6</div>
<div class="a t" style="left:2031.4px;top:896px;font-size:13px;line-height:13px;color:#222;">1.8</div>
<div class="a t" style="left:1689.7px;top:912px;font-size:13px;line-height:13px;color:#222;">Frequency (Hz)</div>
<div class="a t" style="left:2098.0px;top:896px;font-size:13px;line-height:13px;color:#222;transform:scaleX(1.0652);transform-origin:0 0;">×10</div>
<div class="a t" style="left:2122.0px;top:893px;font-size:10px;line-height:10px;color:#222;">6</div>
<div class="a t" style="left:2149.0px;top:124px;font-size:22px;line-height:22px;color:#2557a7;transform:scaleX(0.8915);transform-origin:0 0;-webkit-text-stroke:0.45px #f8f9fd;">Add Study</div>
<div class="a t" style="left:2168.0px;top:152px;font-size:12px;line-height:12px;transform:scaleX(0.9932);transform-origin:0 0;">Add Study</div>
<div class="a t" style="left:2159.0px;top:182px;font-size:12px;line-height:12px;transform:scaleX(0.9617);transform-origin:0 0;">Studies</div>
<div class="a t" style="left:2188.6px;top:207px;font-size:12px;line-height:12px;transform:scaleX(0.9750);transform-origin:0 0;">General Studies</div>
<div class="a t" style="left:2208.6px;top:225px;font-size:12px;line-height:12px;transform:scaleX(0.9750);transform-origin:0 0;">Eigenfrequency</div>
<div class="a t" style="left:2208.6px;top:243px;font-size:12px;line-height:12px;transform:scaleX(0.9750);transform-origin:0 0;">Frequency Domain</div>
<div class="a t" style="left:2188.6px;top:261px;font-size:12px;line-height:12px;transform:scaleX(0.9750);transform-origin:0 0;">Preset Studies for Selected Physics Interfaces</div>
<div class="a t" style="left:2208.6px;top:279px;font-size:12px;line-height:12px;transform:scaleX(0.9750);transform-origin:0 0;">Adaptive Frequency Sweep</div>
<div class="a t" style="left:2208.6px;top:297px;font-size:12px;line-height:12px;transform:scaleX(0.9750);transform-origin:0 0;">Boundary Mode Analysis</div>
<div class="a t" style="left:2208.6px;top:315px;font-size:12px;line-height:12px;transform:scaleX(0.9750);transform-origin:0 0;">Frequency Domain, Modal</div>
<div class="a t" style="left:2208.6px;top:333px;font-size:12px;line-height:12px;transform:scaleX(0.9750);transform-origin:0 0;">Frequency Domain, RF Adaptive Mesh</div>
<div class="a t" style="left:2208.6px;top:351px;font-size:12px;line-height:12px;transform:scaleX(0.9750);transform-origin:0 0;">Frequency Domain Source Sweep</div>
<div class="a t" style="left:2208.6px;top:369px;font-size:12px;line-height:12px;transform:scaleX(0.9750);transform-origin:0 0;">TEM Boundary Mode Analysis</div>
<div class="a t" style="left:2188.6px;top:387px;font-size:12px;line-height:12px;transform:scaleX(0.9750);transform-origin:0 0;">Empty Study</div>
<div class="a t" style="left:2159.0px;top:517px;font-size:12px;line-height:12px;transform:scaleX(0.9759);transform-origin:0 0;">Physics interfaces in study</div>
<div class="a t" style="left:2171.0px;top:547px;font-size:12px;line-height:12px;transform:scaleX(0.9433);transform-origin:0 0;">Physics</div>
<div class="a t" style="left:2499.0px;top:547px;font-size:12px;line-height:12px;transform:scaleX(0.9490);transform-origin:0 0;">Solve</div>
<div class="a t" style="left:2169.5px;top:566px;font-size:12px;line-height:12px;transform:scaleX(0.9840);transform-origin:0 0;">Electromagnetic Waves, Frequency Domain (emw)</div>
<div class="a t" style="left:2159.0px;top:590px;font-size:12px;line-height:12px;transform:scaleX(1.0239);transform-origin:0 0;">Multiphysics couplings in study</div>
<div class="a t" style="left:2171.0px;top:620px;font-size:12px;line-height:12px;transform:scaleX(1.0219);transform-origin:0 0;">Multiphysics couplings</div>
<div class="a t" style="left:2499.0px;top:620px;font-size:12px;line-height:12px;transform:scaleX(0.9490);transform-origin:0 0;">Solve</div>
<div class="a t" style="left:1277.0px;top:950px;font-size:13px;line-height:13px;color:#2d5ea8;transform:scaleX(0.9873);transform-origin:0 0;">Messages</div>
<div class="a t" style="left:1373.5px;top:951px;font-size:12px;line-height:12px;transform:scaleX(1.0514);transform-origin:0 0;">Progress</div>
<div class="a t" style="left:1441.0px;top:951px;font-size:12px;line-height:12px;transform:scaleX(1.0484);transform-origin:0 0;">Log</div>
<div class="a t" style="left:1276.0px;top:1001px;font-size:12px;line-height:12px;transform:scaleX(0.9592);transform-origin:0 0;">[Mar 28, 2023, 5:01 PM] Finalized geometry has 1 domain, 17 boundaries, 49 edges, and 34 vertices.</div>
<div class="a t" style="left:1276.0px;top:1016px;font-size:12px;line-height:12px;transform:scaleX(0.9730);transform-origin:0 0;">[Mar 28, 2023, 5:02 PM] Formed union of 1 solid object and 3 surface objects.</div>
<div class="a t" style="left:1276.0px;top:1031px;font-size:12px;line-height:12px;transform:scaleX(0.9592);transform-origin:0 0;">[Mar 28, 2023, 5:02 PM] Finalized geometry has 1 domain, 17 boundaries, 49 edges, and 34 vertices.</div>
<div class="a t" style="left:1276.0px;top:1046px;font-size:12px;line-height:12px;transform:scaleX(0.9677);transform-origin:0 0;">[Mar 28, 2023, 5:03 PM] Number of degrees of freedom solved for: 13778.</div>
<div class="a t" style="left:1276.0px;top:1061px;font-size:12px;line-height:12px;transform:scaleX(0.9575);transform-origin:0 0;">[Mar 28, 2023, 5:03 PM] Solution time (Study 1): 3 s.</div>
<div class="a t" style="left:1276.0px;top:1076px;font-size:12px;line-height:12px;transform:scaleX(0.9677);transform-origin:0 0;">[Mar 28, 2023, 5:04 PM] Number of degrees of freedom solved for: 13778.</div>
<div class="a t" style="left:1276.0px;top:1091px;font-size:12px;line-height:12px;transform:scaleX(0.9677);transform-origin:0 0;">[Mar 28, 2023, 5:06 PM] Number of degrees of freedom solved for: 13778.</div>
<div class="a t" style="left:1276.0px;top:1106px;font-size:12px;line-height:12px;transform:scaleX(0.9802);transform-origin:0 0;">[Mar 28, 2023, 5:07 PM] Saved file: C:\Users\nnrinck\Documents\Nicole_Rinck.mph</div>
<div class="a t" style="left:1276.0px;top:1121px;font-size:12px;line-height:12px;transform:scaleX(0.9677);transform-origin:0 0;">[Mar 28, 2023, 5:08 PM] Number of degrees of freedom solved for: 13778.</div>
<div class="a t" style="left:1276.0px;top:1135px;font-size:12px;line-height:12px;transform:scaleX(0.9677);transform-origin:0 0;">[Mar 28, 2023, 5:24 PM] Number of degrees of freedom solved for: 13778.</div>
<div class="a t" style="left:1276.0px;top:1150px;font-size:12px;line-height:12px;transform:scaleX(0.9677);transform-origin:0 0;">[Mar 28, 2023, 5:28 PM] Number of degrees of freedom solved for: 13778.</div>
<div class="a t" style="left:1276.0px;top:1165px;font-size:12px;line-height:12px;transform:scaleX(0.9677);transform-origin:0 0;">[Mar 28, 2023, 5:36 PM] Number of degrees of freedom solved for: 13778.</div>
<div class="a t" style="left:1276.0px;top:1180px;font-size:12px;line-height:12px;transform:scaleX(0.9802);transform-origin:0 0;">[Mar 28, 2023, 5:43 PM] Saved file: C:\Users\nnrinck\Documents\Nicole_Rinck.mph</div>
<div class="a t" style="left:1276.0px;top:1195px;font-size:12px;line-height:12px;transform:scaleX(0.9677);transform-origin:0 0;">[Mar 28, 2023, 5:44 PM] Number of degrees of freedom solved for: 13778.</div>
<div class="a" style="left:-5px;top:1206px;width:545px;height:8px;background:#f8f9fd;"></div>
<div class="a" style="left:-5px;top:1205px;width:545px;height:1px;background:#d2d2d2;"></div>
<div class="a" style="left:2042px;top:231px;width:74px;height:46px;background:#fff;border:1px solid #111;box-sizing:border-box;"></div>
<svg class="a" style="left:2050px;top:243px;" width="26" height="20" viewBox="0 0 26 20"><path d="M0 1.5 H26" stroke="#2030ff" stroke-width="1"/><path d="M0 20.5 H26" stroke="#20b020" stroke-width="1"/></svg>
<div class="a t" style="left:2083.0px;top:239px;font-size:13px;line-height:13px;color:#111;transform:scaleX(1.0374);transform-origin:0 0;font-family:'Liberation Mono',monospace;">S11</div>
<div class="a t" style="left:2083.0px;top:258px;font-size:13px;line-height:13px;color:#111;transform:scaleX(0.9939);transform-origin:0 0;font-family:'Liberation Mono',monospace;">S21</div>
<div class="a" style="left:1082px;top:511px;width:361px;height:191px;background:#ffffff;border:1px solid #7a7a7a;box-sizing:border-box;"></div>
<svg class="a" style="left:1092px;top:519px;" width="14" height="14" viewBox="0 0 14 14"><circle cx="7" cy="7" r="7" fill="#d6245f"/><path d="M4.3 4.3 L9.7 9.7 M9.7 4.3 L4.3 9.7" stroke="#fff" stroke-width="1.2"/></svg>
<svg class="a" style="left:1421px;top:521px;" width="11" height="11" viewBox="0 0 11 11"><path d="M0.5 0.5 L10.5 10.5 M10.5 0.5 L0.5 10.5" stroke="#111" stroke-width="1"/></svg>
<div class="a" style="left:1363px;top:675px;width:70px;height:19px;background:#e1e1e1;border:1px solid #0078d7;box-sizing:border-box;"></div>
<div class="a t" style="left:1112.4px;top:521px;font-size:12px;line-height:12px;transform:scaleX(0.9186);transform-origin:0 0;">Error</div>
<div class="a t" style="left:1097.8px;top:557px;font-size:15px;line-height:15px;color:#3a8fd6;">The following feature has encountered a problem:</div>
<div class="a t" style="left:1099.4px;top:593px;font-size:12px;line-height:12px;transform:scaleX(0.9588);transform-origin:0 0;">- Feature: Stationary Solver 1 (sol1/s1)</div>
<div class="a t" style="left:1097.3px;top:608px;font-size:12px;line-height:12px;">Failed to find a solution for the initial parameter.</div>
<div class="a t" style="left:1097.3px;top:622px;font-size:12px;line-height:12px;">Divergence of the linear iterations.</div>
<div class="a t" style="left:1097.3px;top:637px;font-size:12px;line-height:12px;">Returned solution is not converged.</div>
<div class="a t" style="left:1097.3px;top:652px;font-size:12px;line-height:12px;">Not all parameter steps returned.</div>
<div class="a t" style="left:1389.3px;top:678px;font-size:12px;line-height:12px;">OK</div>
<div class="a" style="left:0;top:1246px;width:2542px;height:14px;overflow:hidden;"><svg class="a" style="left:0;top:0" width="2542" height="14"><path d="M2 12.5 L7.8 11.7 V14 H2 Z M8.6 11.6 L14.5 10.8 V14 H8.6 Z" fill="#fff"/><circle cx="52" cy="14" r="4" fill="none" stroke="#222" stroke-width="1.4"/><rect x="333" y="10" width="2" height="4" fill="#fff"/><rect x="340" y="10" width="2" height="4" fill="#fff"/><rect x="347" y="10" width="2" height="4" fill="#fff"/><circle cx="392.5" cy="19" r="11" fill="#e8453c"/><path d="M440 14 Q442 6 446 11 L448 6 Q452 9 452 14 Z" fill="#f7cf3a"/><path d="M433 14 L437 9 L439 14Z" fill="#f0a030"/><rect x="480" y="10" width="9" height="4" fill="#e8a820"/><rect x="483" y="12" width="18" height="2" fill="#f3c653"/><rect x="534" y="9" width="18" height="5" fill="#3a96dd"/><rect x="583" y="9" width="9" height="5" fill="#1f8f55"/><rect x="592" y="9" width="9" height="5" fill="#33c481"/><circle cx="639" cy="20" r="10.5" fill="#e8643e"/><rect x="662" y="0" width="45" height="14" fill="#474747"/><path d="M678 14 L681 11 L695 8.5 L696 14 Z" fill="#d8d8d8"/><rect x="708" y="0" width="2" height="14" fill="#2e2e2e"/><path d="M2384 14 L2386.5 11.5 L2389 14" stroke="#fff" stroke-width="1" fill="none"/><path d="M2411 14 Q2413 10 2415 14" stroke="#fff" stroke-width="1" fill="none"/><rect x="2501" y="12" width="16" height="2" fill="#fff"/><rect x="2537" y="0" width="1" height="14" fill="#666"/></svg><div class="a t" style="left:2436px;top:5px;font-size:12px;line-height:12px;color:#fff;transform:scaleX(0.92);transform-origin:0 0;">5:46 PM</div></div>
</body></html>
